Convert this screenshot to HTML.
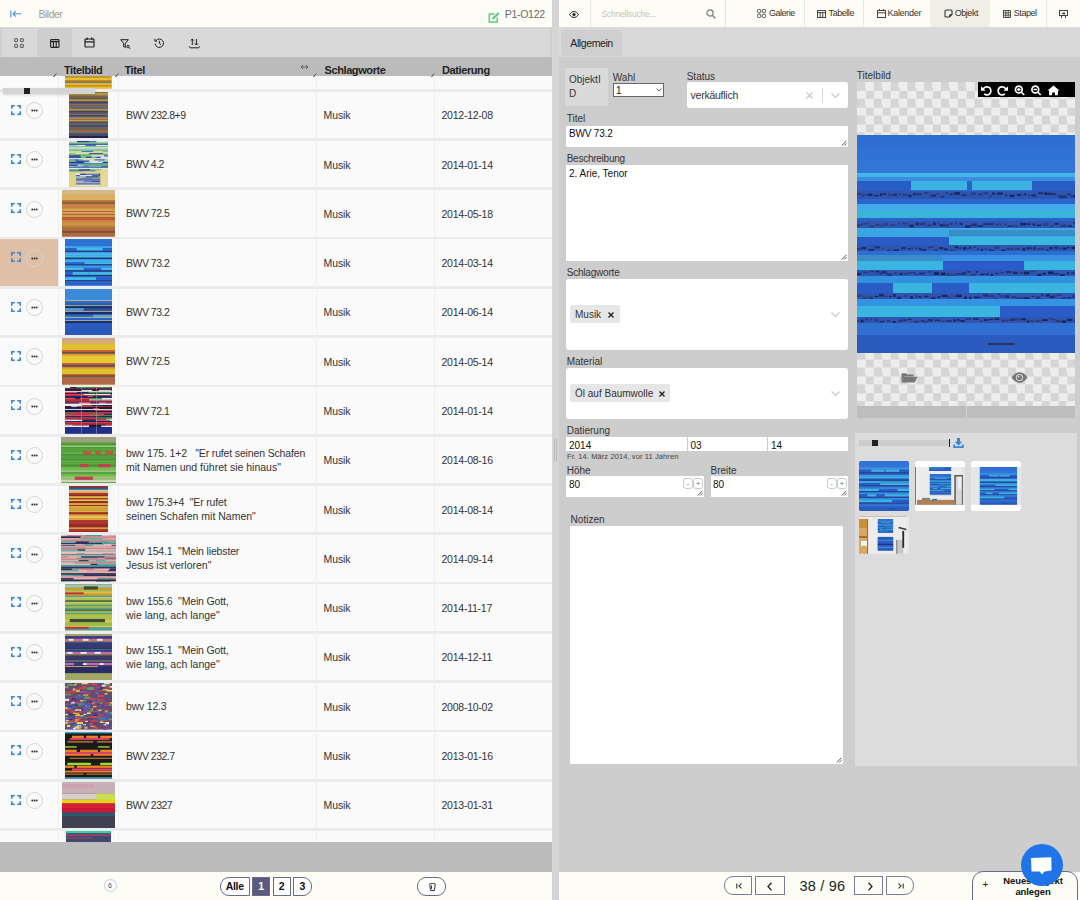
<!DOCTYPE html>
<html><head><meta charset="utf-8">
<style>
*{box-sizing:border-box;margin:0;padding:0}
html,body{width:1080px;height:900px;overflow:hidden;background:#d4d4d4;font-family:"Liberation Sans",sans-serif;color:#333}
.abs{position:absolute}
#left{position:absolute;left:0;top:0;width:552px;height:900px;background:#fafafa;overflow:hidden}
#ltop{position:absolute;left:0;top:0;width:552px;height:28px;background:#fdfdf5;border-bottom:1px solid #dcdcd4}
#ltool{position:absolute;left:0;top:28px;width:552px;height:29px;background:#d9d9d9}
#lhead{position:absolute;left:0;top:57px;width:552px;height:19.2px;background:#bbbbbb}
#rows{position:absolute;left:0;top:0;width:552px;height:842px;overflow:hidden}
.row{position:absolute;left:0;width:552px;background:#fafafa;border-bottom:0}
#rowsbg{position:absolute;left:0;top:77px;width:552px;height:765px;background:#ebebeb}
.hlbg{position:absolute;left:0;top:0;width:58px;background:#dfbfa6}
.colsep{position:absolute;top:77px;height:765px;width:1px;background:#efefef}
.img{position:absolute}
.t{position:absolute;left:126px;font-size:10.5px;line-height:14px;letter-spacing:0px;color:#333;white-space:nowrap}
.t.up{letter-spacing:-0.5px}
.tag{position:absolute;left:323.5px;font-size:10.5px;line-height:14px;letter-spacing:-0.1px;color:#333}
.dt{position:absolute;left:441.5px;font-size:10.5px;line-height:14px;letter-spacing:-0.24px;color:#333}
.fs{position:absolute;left:10.8px}
.dots{position:absolute;left:26px;width:17px;height:17px;border:1px solid #d4d4d4;border-radius:50%;display:flex;align-items:center;justify-content:center;gap:0.8px}
.dots span{width:1.7px;height:1.7px;background:#333;border-radius:1px}
.hd{position:absolute;top:64px;font-size:11px;font-weight:bold;letter-spacing:-0.4px;color:#222;line-height:13px}
#lgrey{position:absolute;left:0;top:842px;width:552px;height:29.7px;background:#bbbbbb}
#lfoot{position:absolute;left:0;top:871.7px;width:552px;height:29px;background:#fdfdf5}
#div{position:absolute;left:552px;top:0;width:7px;height:900px;background:#d5d5d5}
#right{position:absolute;left:559px;top:0;width:521px;height:900px;background:#cdcdcd}
#rtop{position:absolute;left:559px;top:0;width:521px;height:28px;background:#fdfdf5;border-bottom:1px solid #dcdcd4}
#rtabs{position:absolute;left:559px;top:28px;width:521px;height:29px;background:#d9d9d9}
#rfoot{position:absolute;left:559px;top:871.5px;width:521px;height:29px;background:#fdfdf5}

.tb{position:absolute;top:7px;font-size:9px;line-height:12px;letter-spacing:-0.45px;color:#333}
.lb{position:absolute;font-size:10px;line-height:12px;color:#333;margin-top:0.7px}
.inp{background:#fff;border-radius:1px}
.pm{position:absolute;top:477.8px;width:10.2px;height:11px;border:1px solid #ccc;border-radius:3px;background:#fff;font-size:8px;line-height:9px;text-align:center;color:#777}
.checker{background:repeating-conic-gradient(#ededed 0 25%,#d5d5d5 0 50%) 0 0/16.8px 16.8px}
.painting{background:
 linear-gradient(180deg,#3a78d0 0 16%,rgba(0,0,0,0) 16%),
 repeating-linear-gradient(180deg,#2a7ad8 0 6px,#40b0e8 6px 10px,#1a3a8a 10px 12px,#2f8ce0 12px 18px,#1e5cc0 18px 22px)}

.nb{position:absolute;top:876.3px;height:18.4px;border:1px solid #7a7a9a;background:#fdfdf5}
/* paintings */
.p1{background:repeating-linear-gradient(180deg,#4a3d5e 0 2px,#c9a93a 2px 3px,#3e5f7a 3px 5px,#7a6a3a 5px 6px,#5a4a6a 6px 8px)}
.p2{background:linear-gradient(180deg,rgba(0,0,0,0) 60%,#e8d890 60%),repeating-linear-gradient(180deg,#2a5cb8 0 2px,#5cc07a 2px 4px,#e8f0f0 4px 5px,#3a7ac8 5px 7px)}
.p3{background:repeating-linear-gradient(180deg,#d9a24a 0 3px,#b8642e 3px 5px,#e8c050 5px 8px,#a0602a 8px 9px)}
.p4{background:repeating-linear-gradient(180deg,#2a7ad8 0 3px,#38b0e0 3px 5px,#1a4aa0 5px 6px,#3090e0 6px 8px)}
.p5{background:linear-gradient(180deg,#3a90d8 0 20%,rgba(0,0,0,0) 20% 75%,#2a60c0 75%),repeating-linear-gradient(180deg,#2a6ac8 0 3px,#e0e040 3px 4px,#1a3a90 4px 6px,#40a0e0 6px 8px)}
.p6{background:linear-gradient(180deg,#d0a070 0 10%,rgba(0,0,0,0) 10% 85%,#a05030 85%),repeating-linear-gradient(180deg,#e8c030 0 4px,#c04830 4px 5px,#6a4a40 5px 6px,#e0b030 6px 9px)}
.p7{background:repeating-linear-gradient(180deg,#1a2a5a 0 2px,#e04050 2px 3px,#e8e8e8 3px 4px,#30a050 4px 5px,#202040 5px 7px)}
.p8{background:repeating-linear-gradient(180deg,#58a848 0 3px,#d8e0b0 3px 4px,#c05040 4px 5px,#70b050 5px 8px)}
.p9{background:repeating-linear-gradient(180deg,#b03030 0 2px,#e0c040 2px 4px,#9a2a2a 4px 5px,#f0e0a0 5px 6px)}
.p10{background:repeating-linear-gradient(180deg,#e0a0a8 0 2px,#3a4a7a 2px 3px,#40a0a0 3px 4px,#d890a0 4px 6px,#2a2a4a 6px 7px)}
.p11{background:repeating-linear-gradient(180deg,#a0c060 0 2px,#e0a040 2px 3px,#60a0c0 3px 4px,#c0d070 4px 6px,#303040 6px 7px)}
.p12{background:linear-gradient(180deg,rgba(0,0,0,0) 85%,#a0a860 85%),repeating-linear-gradient(180deg,#2a3a70 0 3px,#e050a0 3px 4px,#d0c040 4px 5px,#3a4a80 5px 7px)}
.p13{background:repeating-linear-gradient(135deg,#d0b030 0 2px,#7a3a8a 2px 3px,#4a8ac0 3px 4px,#c04040 4px 5px,#e0d070 5px 6px)}
.p14{background:repeating-linear-gradient(180deg,#1a1a1a 0 2px,#f08030 2px 4px,#e04060 4px 5px,#1a1a1a 5px 6px,#90d040 6px 7px)}
.p15{background:linear-gradient(180deg,#c8b0b8 0 30%,#e8d040 30% 45%,#d83040 45% 65%,#404050 70%)}
.p16{background:linear-gradient(180deg,#30c0a0 0 2px,#504a70 2px)}
</style></head><body>
<div id="left">
 <div id="rowsbg"></div>
 <div id="rows">
 <div class="row" style="top:76px;height:12.5px"><div class="img" style="left:65.2px;top:0;width:46.5px;height:12.5px"><svg width="46.5" height="12.5" viewBox="0 0 100 100" preserveAspectRatio="none" style="display:block"><rect width="100" height="100" fill="#d8a820"/><rect x="0" y="0" width="100" height="15" fill="#c89030"/><rect x="0" y="15" width="100" height="20" fill="#e8c030"/><rect x="0" y="35" width="100" height="10" fill="#c86a20"/><rect x="0" y="45" width="100" height="10" fill="#3a7a8a"/><rect x="0" y="55" width="100" height="20" fill="#e0b828"/><rect x="0" y="75" width="100" height="10" fill="#c87a20"/><rect x="0" y="85" width="100" height="15" fill="#e8c030"/></svg></div></div>
<div class="row" style="top:91.50px;height:46.60px"><svg class="fs" style="top:13px" width="10" height="10" viewBox="0 0 10 10"><path d="M0.8 3.8V0.8h3M6.2 0.8h3v3M9.2 6.2v3h-3M3.8 9.2h-3v-3" stroke="#3a86d6" stroke-width="1.6" fill="none"/></svg><div class="dots" style="top:10.5px"><svg width="15" height="15" viewBox="0 0 15 15" style="position:absolute;left:0;top:0"><circle cx="5.3" cy="7.5" r="0.95" fill="#333"/><circle cx="7.5" cy="7.5" r="0.95" fill="#333"/><circle cx="9.7" cy="7.5" r="0.95" fill="#333"/></svg></div><div class="img" style="left:69px;top:0;width:39px;height:46.6px"><svg width="39" height="46.6" viewBox="0 0 100 100" preserveAspectRatio="none" style="display:block"><rect width="100" height="100" fill="#5a4a58"/><rect x="0" y="0" width="100" height="1.44" fill="#6a5060"/><rect x="0" y="1.44" width="100" height="1.6600000000000001" fill="#d0b040"/><rect x="0" y="3.1" width="100" height="2.57" fill="#d0b040"/><rect x="0" y="5.67" width="100" height="2.369999999999999" fill="#c8a840"/><rect x="0" y="8.04" width="100" height="1.370000000000001" fill="#4a4258"/><rect x="0" y="9.41" width="100" height="2.8100000000000005" fill="#a07a48"/><rect x="0" y="12.22" width="100" height="1.9799999999999986" fill="#4a4258"/><rect x="0" y="14.2" width="100" height="2.4499999999999993" fill="#8a8a48"/><rect x="0" y="16.65" width="100" height="2.5" fill="#c8a840"/><rect x="0" y="19.15" width="100" height="2.2600000000000016" fill="#6a5060"/><rect x="0" y="21.41" width="100" height="2.8299999999999983" fill="#4a4258"/><rect x="0" y="24.24" width="100" height="1.240000000000002" fill="#4a5a8a"/><rect x="0" y="25.48" width="100" height="1.2100000000000009" fill="#a07a48"/><rect x="0" y="26.69" width="100" height="2.4399999999999977" fill="#a07a48"/><rect x="0" y="29.13" width="100" height="2.5100000000000016" fill="#4a5a8a"/><rect x="0" y="31.64" width="100" height="1.6000000000000014" fill="#d0b040"/><rect x="0" y="33.24" width="100" height="2.8900000000000006" fill="#4a5a8a"/><rect x="0" y="36.13" width="100" height="1.6199999999999974" fill="#c8a840"/><rect x="0" y="37.75" width="100" height="2.4099999999999966" fill="#d0b040"/><rect x="0" y="40.16" width="100" height="2.9200000000000017" fill="#4a4258"/><rect x="0" y="43.08" width="100" height="1.9500000000000028" fill="#4a5a8a"/><rect x="0" y="45.03" width="100" height="2.8599999999999994" fill="#6a5060"/><rect x="0" y="47.89" width="100" height="1.5300000000000011" fill="#8a8a48"/><rect x="0" y="49.42" width="100" height="1.4200000000000017" fill="#3a3a5a"/><rect x="0" y="50.84" width="100" height="2.809999999999995" fill="#4a5a8a"/><rect x="0" y="53.65" width="100" height="2.8900000000000006" fill="#a07a48"/><rect x="0" y="56.54" width="100" height="2.1099999999999994" fill="#c8a840"/><rect x="0" y="58.65" width="100" height="1.75" fill="#b86a40"/><rect x="0" y="60.4" width="100" height="2.950000000000003" fill="#d0b040"/><rect x="0" y="63.35" width="100" height="2.7199999999999918" fill="#4a5a8a"/><rect x="0" y="66.07" width="100" height="1.9100000000000108" fill="#4a4258"/><rect x="0" y="67.98" width="100" height="2.0600000000000023" fill="#a07a48"/><rect x="0" y="70.04" width="100" height="1.9499999999999886" fill="#3e6a80"/><rect x="0" y="71.99" width="100" height="1.8599999999999994" fill="#3a3a5a"/><rect x="0" y="73.85" width="100" height="1.3599999999999994" fill="#4a5a8a"/><rect x="0" y="75.21" width="100" height="1.3900000000000006" fill="#3e6a80"/><rect x="0" y="76.6" width="100" height="2.1400000000000006" fill="#a07a48"/><rect x="0" y="78.74" width="100" height="1.8700000000000045" fill="#4a4258"/><rect x="0" y="80.61" width="100" height="2.0400000000000063" fill="#8a8a48"/><rect x="0" y="82.65" width="100" height="2.469999999999999" fill="#b86a40"/><rect x="0" y="85.12" width="100" height="2.259999999999991" fill="#a07a48"/><rect x="0" y="87.38" width="100" height="2.3700000000000045" fill="#3e6a80"/><rect x="0" y="89.75" width="100" height="2.0999999999999943" fill="#4a4258"/><rect x="0" y="91.85" width="100" height="2.5900000000000034" fill="#4a5a8a"/><rect x="0" y="94.44" width="100" height="2.8599999999999994" fill="#4a5a8a"/><rect x="0" y="97.3" width="100" height="1.6099999999999994" fill="#4a5a8a"/><rect x="0" y="98.91" width="100" height="1.0900000000000034" fill="#b86a40"/><rect x="0" y="94" width="100" height="6" fill="#2a2040"/></svg></div><div class="t up" style="top:16.3px;">BWV 232.8+9</div><div class="tag" style="top:16.8px">Musik</div><div class="dt" style="top:16.8px">2012-12-08</div></div>
<div class="row" style="top:140.79px;height:46.60px"><svg class="fs" style="top:13px" width="10" height="10" viewBox="0 0 10 10"><path d="M0.8 3.8V0.8h3M6.2 0.8h3v3M9.2 6.2v3h-3M3.8 9.2h-3v-3" stroke="#3a86d6" stroke-width="1.6" fill="none"/></svg><div class="dots" style="top:10.5px"><svg width="15" height="15" viewBox="0 0 15 15" style="position:absolute;left:0;top:0"><circle cx="5.3" cy="7.5" r="0.95" fill="#333"/><circle cx="7.5" cy="7.5" r="0.95" fill="#333"/><circle cx="9.7" cy="7.5" r="0.95" fill="#333"/></svg></div><div class="img" style="left:69px;top:0;width:39px;height:46.6px"><svg width="39" height="46.6" viewBox="0 0 100 100" preserveAspectRatio="none" style="display:block"><rect width="100" height="100" fill="#d8c878"/><rect x="0" y="0" width="20.83" height="3.13" fill="#d8e8e8"/><rect x="20.83" y="0" width="32.08" height="3.13" fill="#1e3a90"/><rect x="52.91" y="0" width="17.549999999999997" height="3.13" fill="#3a78c8"/><rect x="70.46" y="0" width="28.200000000000003" height="3.13" fill="#d8e8e8"/><rect x="98.66" y="0" width="1.3400000000000034" height="3.13" fill="#90d0e0"/><rect x="0" y="3.13" width="100" height="2.8600000000000003" fill="#70c090"/><rect x="0" y="5.99" width="100" height="2.26" fill="#1e3a90"/><rect x="0" y="8.25" width="19.55" height="2.9800000000000004" fill="#90d0e0"/><rect x="19.55" y="8.25" width="22.709999999999997" height="2.9800000000000004" fill="#d8e8e8"/><rect x="42.26" y="8.25" width="26.82" height="2.9800000000000004" fill="#3a78c8"/><rect x="69.08" y="8.25" width="16.92" height="2.9800000000000004" fill="#d8e8e8"/><rect x="86.0" y="8.25" width="14.0" height="2.9800000000000004" fill="#d8e8e8"/><rect x="0" y="11.23" width="100" height="2.369999999999999" fill="#70c090"/><rect x="0" y="13.6" width="100" height="2.639999999999999" fill="#d8e8e8"/><rect x="0" y="16.24" width="100" height="2.2600000000000016" fill="#90d0e0"/><rect x="0" y="18.5" width="100" height="3.039999999999999" fill="#70c090"/><rect x="0" y="21.54" width="32.62" height="2.1000000000000014" fill="#e0d890"/><rect x="32.62" y="21.54" width="29.650000000000006" height="2.1000000000000014" fill="#3a78c8"/><rect x="62.27" y="21.54" width="24.699999999999996" height="2.1000000000000014" fill="#e0d890"/><rect x="86.97" y="21.54" width="13.030000000000001" height="2.1000000000000014" fill="#70c090"/><rect x="0" y="23.64" width="100" height="2.629999999999999" fill="#e0d890"/><rect x="0" y="26.27" width="16.65" height="2.280000000000001" fill="#70c090"/><rect x="16.65" y="26.27" width="34.440000000000005" height="2.280000000000001" fill="#d8e8e8"/><rect x="51.09" y="26.27" width="36.31" height="2.280000000000001" fill="#1e3a90"/><rect x="87.4" y="26.27" width="12.599999999999994" height="2.280000000000001" fill="#e0d890"/><rect x="0" y="28.55" width="16.23" height="2.0299999999999976" fill="#70c090"/><rect x="16.23" y="28.55" width="38.03" height="2.0299999999999976" fill="#50b878"/><rect x="54.26" y="28.55" width="33.53000000000001" height="2.0299999999999976" fill="#70c090"/><rect x="87.79" y="28.55" width="12.209999999999994" height="2.0299999999999976" fill="#3a78c8"/><rect x="0" y="30.58" width="29.59" height="3.190000000000005" fill="#1e3a90"/><rect x="29.59" y="30.58" width="27.750000000000004" height="3.190000000000005" fill="#50b878"/><rect x="57.34" y="30.58" width="32.629999999999995" height="3.190000000000005" fill="#d8e8e8"/><rect x="89.97" y="30.58" width="10.030000000000001" height="3.190000000000005" fill="#3a78c8"/><rect x="0" y="33.77" width="31.51" height="2.8999999999999986" fill="#2a4cb8"/><rect x="31.51" y="33.77" width="11.7" height="2.8999999999999986" fill="#70c090"/><rect x="43.21" y="33.77" width="15.159999999999997" height="2.8999999999999986" fill="#2a4cb8"/><rect x="58.37" y="33.77" width="12.490000000000002" height="2.8999999999999986" fill="#50b878"/><rect x="70.86" y="33.77" width="10.760000000000005" height="2.8999999999999986" fill="#2a4cb8"/><rect x="81.62" y="33.77" width="18.379999999999995" height="2.8999999999999986" fill="#d8e8e8"/><rect x="0" y="36.67" width="100" height="2.8900000000000006" fill="#d8e8e8"/><rect x="0" y="39.56" width="11.29" height="2.3900000000000006" fill="#3a78c8"/><rect x="11.29" y="39.56" width="14.55" height="2.3900000000000006" fill="#2a4cb8"/><rect x="25.84" y="39.56" width="10.120000000000001" height="2.3900000000000006" fill="#50b878"/><rect x="35.96" y="39.56" width="18.58" height="2.3900000000000006" fill="#e0d890"/><rect x="54.54" y="39.56" width="10.93" height="2.3900000000000006" fill="#e0d890"/><rect x="65.47" y="39.56" width="26.540000000000006" height="2.3900000000000006" fill="#2a4cb8"/><rect x="92.01" y="39.56" width="7.989999999999995" height="2.3900000000000006" fill="#90d0e0"/><rect x="0" y="41.95" width="16.77" height="2.9599999999999937" fill="#70c090"/><rect x="16.77" y="41.95" width="35.150000000000006" height="2.9599999999999937" fill="#2a4cb8"/><rect x="51.92" y="41.95" width="23.429999999999993" height="2.9599999999999937" fill="#d8e8e8"/><rect x="75.35" y="41.95" width="24.650000000000006" height="2.9599999999999937" fill="#90d0e0"/><rect x="0" y="44.91" width="38.79" height="2.3300000000000054" fill="#1e3a90"/><rect x="38.79" y="44.91" width="17.86" height="2.3300000000000054" fill="#90d0e0"/><rect x="56.65" y="44.91" width="29.6" height="2.3300000000000054" fill="#d8e8e8"/><rect x="86.25" y="44.91" width="13.75" height="2.3300000000000054" fill="#1e3a90"/><rect x="0" y="47.24" width="23.6" height="1.5599999999999952" fill="#3a78c8"/><rect x="23.6" y="47.24" width="25.25" height="1.5599999999999952" fill="#2a4cb8"/><rect x="48.85" y="47.24" width="39.839999999999996" height="1.5599999999999952" fill="#3a78c8"/><rect x="88.69" y="47.24" width="11.310000000000002" height="1.5599999999999952" fill="#50b878"/><rect x="0" y="48.8" width="100" height="1.9200000000000017" fill="#3a78c8"/><rect x="0" y="50.72" width="22.69" height="2.8599999999999994" fill="#2a4cb8"/><rect x="22.69" y="50.72" width="14.529999999999998" height="2.8599999999999994" fill="#90d0e0"/><rect x="37.22" y="50.72" width="22.270000000000003" height="2.8599999999999994" fill="#50b878"/><rect x="59.49" y="50.72" width="25.359999999999992" height="2.8599999999999994" fill="#50b878"/><rect x="84.85" y="50.72" width="15.150000000000006" height="2.8599999999999994" fill="#50b878"/><rect x="0" y="53.58" width="10.73" height="1.5399999999999991" fill="#e0d890"/><rect x="10.73" y="53.58" width="23.62" height="1.5399999999999991" fill="#90d0e0"/><rect x="34.35" y="53.58" width="16.369999999999997" height="1.5399999999999991" fill="#3a78c8"/><rect x="50.72" y="53.58" width="31.870000000000005" height="1.5399999999999991" fill="#90d0e0"/><rect x="82.59" y="53.58" width="17.409999999999997" height="1.5399999999999991" fill="#2a4cb8"/><rect x="0" y="55.12" width="100" height="2.490000000000002" fill="#2a4cb8"/><rect x="0" y="57.61" width="100" height="3.0700000000000003" fill="#d8e8e8"/><rect x="0" y="60.68" width="25.58" height="2.6300000000000026" fill="#50b878"/><rect x="25.58" y="60.68" width="28.310000000000002" height="2.6300000000000026" fill="#1e3a90"/><rect x="53.89" y="60.68" width="30.709999999999994" height="2.6300000000000026" fill="#70c090"/><rect x="84.6" y="60.68" width="15.400000000000006" height="2.6300000000000026" fill="#90d0e0"/><rect x="0" y="63.31" width="33.26" height="1.6700000000000017" fill="#2a4cb8"/><rect x="33.26" y="63.31" width="34.36000000000001" height="1.6700000000000017" fill="#2a4cb8"/><rect x="67.62" y="63.31" width="22.319999999999993" height="1.6700000000000017" fill="#e0d890"/><rect x="89.94" y="63.31" width="10.060000000000002" height="1.6700000000000017" fill="#50b878"/><rect x="0" y="64.98" width="38.06" height="1.019999999999996" fill="#50b878"/><rect x="38.06" y="64.98" width="16.57" height="1.019999999999996" fill="#e0d890"/><rect x="54.63" y="64.98" width="15.770000000000003" height="1.019999999999996" fill="#70c090"/><rect x="70.4" y="64.98" width="21.75999999999999" height="1.019999999999996" fill="#e0d890"/><rect x="92.16" y="64.98" width="7.840000000000003" height="1.019999999999996" fill="#70c090"/><rect x="0" y="66" width="100" height="34" fill="#e0d488"/><rect x="18" y="70" width="10.39" height="3.4399999999999977" fill="#e8e8f0"/><rect x="28.39" y="70" width="15.530000000000001" height="3.4399999999999977" fill="#3a4aa0"/><rect x="43.92" y="70" width="32.19" height="3.4399999999999977" fill="#5a80c8"/><rect x="76.11" y="70" width="3.8900000000000006" height="3.4399999999999977" fill="#3a4aa0"/><rect x="18" y="73.44" width="10.030000000000001" height="2.3400000000000034" fill="#2a3a80"/><rect x="28.03" y="73.44" width="30.560000000000002" height="2.3400000000000034" fill="#e8e8f0"/><rect x="58.59" y="73.44" width="21.409999999999997" height="2.3400000000000034" fill="#3a4aa0"/><rect x="18" y="75.78" width="24.9" height="2.8900000000000006" fill="#8ab0d0"/><rect x="42.9" y="75.78" width="33.220000000000006" height="2.8900000000000006" fill="#2a3a80"/><rect x="76.12" y="75.78" width="3.8799999999999955" height="2.8900000000000006" fill="#5a80c8"/><rect x="18" y="78.67" width="15.43" height="2.280000000000001" fill="#8ab0d0"/><rect x="33.43" y="78.67" width="25.46" height="2.280000000000001" fill="#5a80c8"/><rect x="58.89" y="78.67" width="21.11" height="2.280000000000001" fill="#8ab0d0"/><rect x="18" y="80.95" width="62" height="2.069999999999993" fill="#2a3a80"/><rect x="18" y="83.02" width="62" height="2.6300000000000097" fill="#5a80c8"/><rect x="18" y="85.65" width="19.729999999999997" height="2.769999999999996" fill="#d8a0b0"/><rect x="37.73" y="85.65" width="19.220000000000006" height="2.769999999999996" fill="#5a80c8"/><rect x="56.95" y="85.65" width="21.92" height="2.769999999999996" fill="#3a4aa0"/><rect x="78.87" y="85.65" width="1.1299999999999955" height="2.769999999999996" fill="#2a3a80"/><rect x="18" y="88.42" width="62" height="2.6499999999999915" fill="#8ab0d0"/><rect x="18" y="91.07" width="62" height="2.6500000000000057" fill="#3a4aa0"/><rect x="18" y="93.72" width="62" height="2.280000000000001" fill="#e8e8f0"/><rect x="82" y="60" width="18" height="40" fill="#e8d898"/></svg></div><div class="t up" style="top:16.3px;">BWV 4.2</div><div class="tag" style="top:16.8px">Musik</div><div class="dt" style="top:16.8px">2014-01-14</div></div>
<div class="row" style="top:190.08px;height:46.60px"><svg class="fs" style="top:13px" width="10" height="10" viewBox="0 0 10 10"><path d="M0.8 3.8V0.8h3M6.2 0.8h3v3M9.2 6.2v3h-3M3.8 9.2h-3v-3" stroke="#3a86d6" stroke-width="1.6" fill="none"/></svg><div class="dots" style="top:10.5px"><svg width="15" height="15" viewBox="0 0 15 15" style="position:absolute;left:0;top:0"><circle cx="5.3" cy="7.5" r="0.95" fill="#333"/><circle cx="7.5" cy="7.5" r="0.95" fill="#333"/><circle cx="9.7" cy="7.5" r="0.95" fill="#333"/></svg></div><div class="img" style="left:62px;top:0;width:53px;height:46.6px"><svg width="53" height="46.6" viewBox="0 0 100 100" preserveAspectRatio="none" style="display:block"><rect width="100" height="100" fill="#c8944a"/><rect x="0" y="0" width="100" height="10" fill="#d8b888"/><rect x="0" y="10" width="100" height="12" fill="#d8b060"/><rect x="0" y="22" width="100" height="4" fill="#b8703a"/><rect x="0" y="26" width="100" height="4" fill="#8a5a48"/><rect x="0" y="30" width="100" height="2.710000000000001" fill="#c88040"/><rect x="0" y="32.71" width="100" height="2.3999999999999986" fill="#c88040"/><rect x="0" y="35.11" width="100" height="3.4200000000000017" fill="#c88040"/><rect x="0" y="38.53" width="100" height="2.1899999999999977" fill="#c8944a"/><rect x="0" y="40.72" width="100" height="4.730000000000004" fill="#d8a050"/><rect x="0" y="45.45" width="100" height="2.779999999999994" fill="#b85a32"/><rect x="0" y="48.23" width="100" height="2.5700000000000003" fill="#e8cc80"/><rect x="0" y="50.8" width="100" height="3.4100000000000037" fill="#a8683a"/><rect x="0" y="54.21" width="100" height="3.6499999999999986" fill="#d8a050"/><rect x="0" y="57.86" width="100" height="3.9200000000000017" fill="#b85a32"/><rect x="0" y="61.78" width="100" height="2.700000000000003" fill="#b85a32"/><rect x="0" y="64.48" width="100" height="4.599999999999994" fill="#c88040"/><rect x="0" y="69.08" width="100" height="3.1700000000000017" fill="#c8944a"/><rect x="0" y="72.25" width="100" height="4.010000000000005" fill="#c8944a"/><rect x="0" y="76.26" width="100" height="2.4799999999999898" fill="#c88040"/><rect x="0" y="78.74" width="100" height="2.1300000000000097" fill="#a8683a"/><rect x="0" y="80.87" width="100" height="1.1299999999999955" fill="#a8683a"/><rect x="0" y="82" width="100" height="18" fill="#a86a40"/><rect x="0" y="88" width="100" height="4" fill="#8a4a30"/></svg></div><div class="t up" style="top:16.3px;">BWV 72.5</div><div class="tag" style="top:16.8px">Musik</div><div class="dt" style="top:16.8px">2014-05-18</div></div>
<div class="row" style="top:239.37px;height:46.60px"><div class="hlbg" style="height:46.60px"></div><svg class="fs" style="top:13px" width="10" height="10" viewBox="0 0 10 10"><path d="M0.8 3.8V0.8h3M6.2 0.8h3v3M9.2 6.2v3h-3M3.8 9.2h-3v-3" stroke="#3a86d6" stroke-width="1.6" fill="none"/></svg><div class="dots" style="top:10.5px"><svg width="15" height="15" viewBox="0 0 15 15" style="position:absolute;left:0;top:0"><circle cx="5.3" cy="7.5" r="0.95" fill="#333"/><circle cx="7.5" cy="7.5" r="0.95" fill="#333"/><circle cx="9.7" cy="7.5" r="0.95" fill="#333"/></svg></div><div class="img" style="left:65px;top:0;width:47px;height:46.6px"><svg width="47" height="46.6" viewBox="0 0 100 100" preserveAspectRatio="none" style="display:block"><rect width="100" height="100" fill="#2f78d8"/><rect x="0" y="0" width="100" height="16" fill="#2f72d6"/><rect x="0" y="16" width="100" height="3" fill="#4cc0ee"/><rect x="0" y="19" width="100" height="6" fill="#2a62cc"/><rect x="25" y="19" width="55" height="6" fill="#40bce8"/><rect x="0" y="25" width="100" height="3" fill="#28408a"/><rect x="0" y="29" width="100" height="6" fill="#48b4ee"/><rect x="0" y="35" width="100" height="5" fill="#40c0e0"/><rect x="0" y="40" width="100" height="3" fill="#24387a"/><rect x="0" y="44" width="100" height="6" fill="#40aeea"/><rect x="0" y="50" width="42" height="4" fill="#2a62cc"/><rect x="42" y="50" width="58" height="4" fill="#40c0e8"/><rect x="0" y="54" width="100" height="3" fill="#26387a"/><rect x="0" y="57" width="100" height="5" fill="#3a9ae6"/><rect x="0" y="62" width="40" height="5" fill="#40bce8"/><rect x="40" y="62" width="37" height="5" fill="#2a62d0"/><rect x="77" y="62" width="23" height="5" fill="#40bce8"/><rect x="0" y="67" width="100" height="3" fill="#24387a"/><rect x="16" y="71" width="34" height="6" fill="#40bce8"/><rect x="0" y="71" width="16" height="6" fill="#2a62cc"/><rect x="50" y="71" width="50" height="6" fill="#40bce8"/><rect x="0" y="77" width="100" height="3" fill="#26387a"/><rect x="0" y="82" width="66" height="6" fill="#40bce8"/><rect x="66" y="82" width="34" height="6" fill="#2a62cc"/><rect x="0" y="88" width="100" height="2" fill="#24387a"/><rect x="0" y="90" width="100" height="10" fill="#2a64c8"/></svg></div><div class="t up" style="top:16.3px;">BWV 73.2</div><div class="tag" style="top:16.8px">Musik</div><div class="dt" style="top:16.8px">2014-03-14</div></div>
<div class="row" style="top:288.66px;height:46.60px"><svg class="fs" style="top:13px" width="10" height="10" viewBox="0 0 10 10"><path d="M0.8 3.8V0.8h3M6.2 0.8h3v3M9.2 6.2v3h-3M3.8 9.2h-3v-3" stroke="#3a86d6" stroke-width="1.6" fill="none"/></svg><div class="dots" style="top:10.5px"><svg width="15" height="15" viewBox="0 0 15 15" style="position:absolute;left:0;top:0"><circle cx="5.3" cy="7.5" r="0.95" fill="#333"/><circle cx="7.5" cy="7.5" r="0.95" fill="#333"/><circle cx="9.7" cy="7.5" r="0.95" fill="#333"/></svg></div><div class="img" style="left:65px;top:0;width:47px;height:46.6px"><svg width="47" height="46.6" viewBox="0 0 100 100" preserveAspectRatio="none" style="display:block"><rect width="100" height="100" fill="#2a5cc0"/><rect x="0" y="0" width="100" height="24" fill="#3a8ad8"/><rect x="0" y="24" width="100" height="2" fill="#c8d070"/><rect x="0" y="26" width="100" height="5" fill="#2a6ad0"/><rect x="0" y="31" width="100" height="4" fill="#2a5cb0"/><rect x="0" y="35" width="100" height="2" fill="#b8c080"/><rect x="0" y="37" width="100" height="4" fill="#1e2a60"/><rect x="0" y="41" width="40" height="6" fill="#4a9ad8"/><rect x="40" y="41" width="60" height="6" fill="#2a4aa0"/><rect x="0" y="47" width="100" height="2" fill="#d0d080"/><rect x="0" y="49" width="100" height="6" fill="#1e2a60"/><rect x="0" y="55" width="60" height="5" fill="#2a6ad0"/><rect x="60" y="55" width="40" height="5" fill="#58a8e0"/><rect x="0" y="60" width="100" height="2" fill="#c8d070"/><rect x="0" y="62" width="100" height="5" fill="#2a60c8"/><rect x="0" y="67" width="100" height="2" fill="#b8c090"/><rect x="0" y="69" width="100" height="4" fill="#1e2a60"/><rect x="0" y="73" width="100" height="27" fill="#2a5cc0"/><rect x="0" y="85" width="100" height="15" fill="#2a58b8"/></svg></div><div class="t up" style="top:16.3px;">BWV 73.2</div><div class="tag" style="top:16.8px">Musik</div><div class="dt" style="top:16.8px">2014-06-14</div></div>
<div class="row" style="top:337.95px;height:46.60px"><svg class="fs" style="top:13px" width="10" height="10" viewBox="0 0 10 10"><path d="M0.8 3.8V0.8h3M6.2 0.8h3v3M9.2 6.2v3h-3M3.8 9.2h-3v-3" stroke="#3a86d6" stroke-width="1.6" fill="none"/></svg><div class="dots" style="top:10.5px"><svg width="15" height="15" viewBox="0 0 15 15" style="position:absolute;left:0;top:0"><circle cx="5.3" cy="7.5" r="0.95" fill="#333"/><circle cx="7.5" cy="7.5" r="0.95" fill="#333"/><circle cx="9.7" cy="7.5" r="0.95" fill="#333"/></svg></div><div class="img" style="left:62px;top:0;width:53px;height:46.6px"><svg width="53" height="46.6" viewBox="0 0 100 100" preserveAspectRatio="none" style="display:block"><rect width="100" height="100" fill="#e0b830"/><rect x="0" y="0" width="100" height="8" fill="#d0a890"/><rect x="0" y="8" width="100" height="6" fill="#d8b060"/><rect x="0" y="14" width="100" height="12" fill="#e0c030"/><rect x="0" y="26" width="100" height="4" fill="#c85838"/><rect x="0" y="30" width="100" height="4" fill="#6a4a50"/><rect x="0" y="34" width="100" height="4" fill="#d89838"/><rect x="0" y="38" width="100" height="16" fill="#e8c830"/><rect x="0" y="54" width="100" height="4" fill="#b85838"/><rect x="0" y="58" width="100" height="4" fill="#5a4a60"/><rect x="0" y="62" width="100" height="4" fill="#d88838"/><rect x="0" y="66" width="100" height="12" fill="#e0c028"/><rect x="0" y="78" width="100" height="4" fill="#9a4a3a"/><rect x="0" y="82" width="100" height="3" fill="#5a4a50"/><rect x="0" y="85" width="100" height="15" fill="#b06848"/></svg></div><div class="t up" style="top:16.3px;">BWV 72.5</div><div class="tag" style="top:16.8px">Musik</div><div class="dt" style="top:16.8px">2014-05-14</div></div>
<div class="row" style="top:387.24px;height:46.60px"><svg class="fs" style="top:13px" width="10" height="10" viewBox="0 0 10 10"><path d="M0.8 3.8V0.8h3M6.2 0.8h3v3M9.2 6.2v3h-3M3.8 9.2h-3v-3" stroke="#3a86d6" stroke-width="1.6" fill="none"/></svg><div class="dots" style="top:10.5px"><svg width="15" height="15" viewBox="0 0 15 15" style="position:absolute;left:0;top:0"><circle cx="5.3" cy="7.5" r="0.95" fill="#333"/><circle cx="7.5" cy="7.5" r="0.95" fill="#333"/><circle cx="9.7" cy="7.5" r="0.95" fill="#333"/></svg></div><div class="img" style="left:65px;top:0;width:47px;height:46.6px"><svg width="47" height="46.6" viewBox="0 0 100 100" preserveAspectRatio="none" style="display:block"><rect width="100" height="100" fill="#1a1a3a"/><rect x="0" y="0" width="11.45" height="2.05" fill="#f0f0f0"/><rect x="11.45" y="0" width="12.82" height="2.05" fill="#1a1a3a"/><rect x="24.27" y="0" width="37.290000000000006" height="2.05" fill="#30a040"/><rect x="61.56" y="0" width="11.129999999999995" height="2.05" fill="#c83040"/><rect x="72.69" y="0" width="22.540000000000006" height="2.05" fill="#30a040"/><rect x="95.23" y="0" width="4.769999999999996" height="2.05" fill="#c83040"/><rect x="0" y="2.05" width="100" height="1.6" fill="#e04050"/><rect x="0" y="3.65" width="100" height="2.57" fill="#1a1a3a"/><rect x="0" y="6.22" width="35.75" height="2.1800000000000006" fill="#1a1a3a"/><rect x="35.75" y="6.22" width="22.58" height="2.1800000000000006" fill="#f0f0f0"/><rect x="58.33" y="6.22" width="13.530000000000001" height="2.1800000000000006" fill="#1a1a3a"/><rect x="71.86" y="6.22" width="26.810000000000002" height="2.1800000000000006" fill="#e8e8e8"/><rect x="98.67" y="6.22" width="1.3299999999999983" height="2.1800000000000006" fill="#30a040"/><rect x="0" y="8.4" width="100" height="2.129999999999999" fill="#f0f0f0"/><rect x="0" y="10.53" width="25.95" height="2.460000000000001" fill="#e84860"/><rect x="25.95" y="10.53" width="23.970000000000002" height="2.460000000000001" fill="#1a2a6a"/><rect x="49.92" y="10.53" width="20.849999999999994" height="2.460000000000001" fill="#30a040"/><rect x="70.77" y="10.53" width="29.230000000000004" height="2.460000000000001" fill="#30a040"/><rect x="0" y="12.99" width="100" height="1.6400000000000006" fill="#1a1a3a"/><rect x="0" y="14.63" width="39.41" height="2.99" fill="#e04050"/><rect x="39.41" y="14.63" width="25.35000000000001" height="2.99" fill="#e8e8e8"/><rect x="64.76" y="14.63" width="32.72" height="2.99" fill="#e8e8e8"/><rect x="97.48" y="14.63" width="2.519999999999996" height="2.99" fill="#c83040"/><rect x="0" y="17.62" width="100" height="1.5599999999999987" fill="#e04050"/><rect x="0" y="19.18" width="20.51" height="2.4800000000000004" fill="#1a2a6a"/><rect x="20.51" y="19.18" width="27.389999999999997" height="2.4800000000000004" fill="#1a2a6a"/><rect x="47.9" y="19.18" width="12.07" height="2.4800000000000004" fill="#e04050"/><rect x="59.97" y="19.18" width="38.34" height="2.4800000000000004" fill="#1a2a6a"/><rect x="98.31" y="19.18" width="1.6899999999999977" height="2.4800000000000004" fill="#e04050"/><rect x="0" y="21.66" width="100" height="1.6000000000000014" fill="#1a1a3a"/><rect x="0" y="23.26" width="21.57" height="3.1899999999999977" fill="#e84860"/><rect x="21.57" y="23.26" width="10.68" height="3.1899999999999977" fill="#1a2a6a"/><rect x="32.25" y="23.26" width="20.659999999999997" height="3.1899999999999977" fill="#e04050"/><rect x="52.91" y="23.26" width="24.820000000000007" height="3.1899999999999977" fill="#30a040"/><rect x="77.73" y="23.26" width="22.269999999999996" height="3.1899999999999977" fill="#e8e8e8"/><rect x="0" y="26.45" width="36.14" height="2.75" fill="#e04050"/><rect x="36.14" y="26.45" width="14.990000000000002" height="2.75" fill="#c83040"/><rect x="51.13" y="26.45" width="26.490000000000002" height="2.75" fill="#e8e8e8"/><rect x="77.62" y="26.45" width="22.379999999999995" height="2.75" fill="#f0f0f0"/><rect x="0" y="29.2" width="100" height="1.9800000000000004" fill="#c83040"/><rect x="0" y="31.18" width="100" height="2.6600000000000037" fill="#c83040"/><rect x="0" y="33.84" width="29.76" height="1.75" fill="#1a1a3a"/><rect x="29.76" y="33.84" width="24.539999999999996" height="1.75" fill="#e8e8e8"/><rect x="54.3" y="33.84" width="17.89" height="1.75" fill="#1a1a3a"/><rect x="72.19" y="33.84" width="14.370000000000005" height="1.75" fill="#f0f0f0"/><rect x="86.56" y="33.84" width="13.439999999999998" height="1.75" fill="#e84860"/><rect x="0" y="35.59" width="100" height="3.1299999999999955" fill="#f0f0f0"/><rect x="0" y="38.72" width="36.13" height="2.6099999999999994" fill="#f0f0f0"/><rect x="36.13" y="38.72" width="21.769999999999996" height="2.6099999999999994" fill="#c83040"/><rect x="57.9" y="38.72" width="21.82" height="2.6099999999999994" fill="#1a2a6a"/><rect x="79.72" y="38.72" width="20.28" height="2.6099999999999994" fill="#1a1a3a"/><rect x="0" y="41.33" width="13.3" height="1.8200000000000003" fill="#1a1a3a"/><rect x="13.3" y="41.33" width="13.07" height="1.8200000000000003" fill="#e8e8e8"/><rect x="26.37" y="41.33" width="26.099999999999998" height="1.8200000000000003" fill="#e84860"/><rect x="52.47" y="41.33" width="28.409999999999997" height="1.8200000000000003" fill="#e04050"/><rect x="80.88" y="41.33" width="19.120000000000005" height="1.8200000000000003" fill="#c83040"/><rect x="0" y="43.15" width="100" height="1.759999999999998" fill="#1a1a3a"/><rect x="0" y="44.91" width="35.47" height="2.520000000000003" fill="#1a2a6a"/><rect x="35.47" y="44.91" width="24.410000000000004" height="2.520000000000003" fill="#1a1a3a"/><rect x="59.88" y="44.91" width="12.579999999999991" height="2.520000000000003" fill="#e04050"/><rect x="72.46" y="44.91" width="27.540000000000006" height="2.520000000000003" fill="#1a1a3a"/><rect x="0" y="47.43" width="100" height="2.3100000000000023" fill="#e8e8e8"/><rect x="0" y="49.74" width="30.7" height="1.8500000000000014" fill="#1a1a3a"/><rect x="30.7" y="49.74" width="32.75" height="1.8500000000000014" fill="#1a1a3a"/><rect x="63.45" y="49.74" width="36.55" height="1.8500000000000014" fill="#e04050"/><rect x="0" y="51.59" width="100" height="2.6799999999999997" fill="#1a1a3a"/><rect x="0" y="54.27" width="100" height="3.049999999999997" fill="#e84860"/><rect x="0" y="57.32" width="16.69" height="2.3999999999999986" fill="#30a040"/><rect x="16.69" y="57.32" width="34.17999999999999" height="2.3999999999999986" fill="#c83040"/><rect x="50.87" y="57.32" width="32.199999999999996" height="2.3999999999999986" fill="#30a040"/><rect x="83.07" y="57.32" width="16.0" height="2.3999999999999986" fill="#1a2a6a"/><rect x="99.07" y="57.32" width="0.9300000000000068" height="2.3999999999999986" fill="#1a1a3a"/><rect x="0" y="59.72" width="15.81" height="3.1899999999999977" fill="#e84860"/><rect x="15.81" y="59.72" width="23.419999999999995" height="3.1899999999999977" fill="#e84860"/><rect x="39.23" y="59.72" width="38.65" height="3.1899999999999977" fill="#e84860"/><rect x="77.88" y="59.72" width="12.41000000000001" height="3.1899999999999977" fill="#e04050"/><rect x="90.29" y="59.72" width="9.709999999999994" height="3.1899999999999977" fill="#30a040"/><rect x="0" y="62.91" width="100" height="2.0700000000000074" fill="#1a2a6a"/><rect x="0" y="64.98" width="29.59" height="3.030000000000001" fill="#e04050"/><rect x="29.59" y="64.98" width="35.03999999999999" height="3.030000000000001" fill="#e04050"/><rect x="64.63" y="64.98" width="35.370000000000005" height="3.030000000000001" fill="#30a040"/><rect x="0" y="68.01" width="29.08" height="2.309999999999988" fill="#e04050"/><rect x="29.08" y="68.01" width="34.02" height="2.309999999999988" fill="#c83040"/><rect x="63.1" y="68.01" width="23.889999999999993" height="2.309999999999988" fill="#e04050"/><rect x="86.99" y="68.01" width="13.010000000000005" height="2.309999999999988" fill="#e8e8e8"/><rect x="0" y="70.32" width="37.15" height="3.190000000000012" fill="#e8e8e8"/><rect x="37.15" y="70.32" width="28.339999999999996" height="3.190000000000012" fill="#1a2a6a"/><rect x="65.49" y="70.32" width="29.72" height="3.190000000000012" fill="#e84860"/><rect x="95.21" y="70.32" width="4.790000000000006" height="3.190000000000012" fill="#f0f0f0"/><rect x="0" y="73.51" width="100" height="1.7299999999999898" fill="#1a1a3a"/><rect x="0" y="75.24" width="100" height="2.730000000000004" fill="#e04050"/><rect x="0" y="77.97" width="100" height="3.0900000000000034" fill="#c83040"/><rect x="0" y="81.06" width="16.38" height="1.8299999999999983" fill="#f0f0f0"/><rect x="16.38" y="81.06" width="17.220000000000002" height="1.8299999999999983" fill="#e84860"/><rect x="33.6" y="81.06" width="17.78" height="1.8299999999999983" fill="#c83040"/><rect x="51.38" y="81.06" width="35.029999999999994" height="1.8299999999999983" fill="#1a1a3a"/><rect x="86.41" y="81.06" width="13.590000000000003" height="1.8299999999999983" fill="#e84860"/><rect x="0" y="82.89" width="37.53" height="3.019999999999996" fill="#f0f0f0"/><rect x="37.53" y="82.89" width="13.920000000000002" height="3.019999999999996" fill="#e8e8e8"/><rect x="51.45" y="82.89" width="25.709999999999994" height="3.019999999999996" fill="#1a1a3a"/><rect x="77.16" y="82.89" width="22.840000000000003" height="3.019999999999996" fill="#e8e8e8"/><rect x="0" y="85.91" width="24.2" height="0.09000000000000341" fill="#e04050"/><rect x="24.2" y="85.91" width="26.7" height="0.09000000000000341" fill="#e84860"/><rect x="50.9" y="85.91" width="30.470000000000006" height="0.09000000000000341" fill="#f0f0f0"/><rect x="81.37" y="85.91" width="18.629999999999995" height="0.09000000000000341" fill="#e04050"/><rect x="0" y="86" width="100" height="14" fill="#20308a"/><rect x="34" y="0" width="1" height="100" fill="#b0b0b0"/><rect x="67" y="0" width="1" height="100" fill="#b0b0b0"/></svg></div><div class="t up" style="top:16.3px;">BWV 72.1</div><div class="tag" style="top:16.8px">Musik</div><div class="dt" style="top:16.8px">2014-01-14</div></div>
<div class="row" style="top:436.53px;height:46.60px"><svg class="fs" style="top:13px" width="10" height="10" viewBox="0 0 10 10"><path d="M0.8 3.8V0.8h3M6.2 0.8h3v3M9.2 6.2v3h-3M3.8 9.2h-3v-3" stroke="#3a86d6" stroke-width="1.6" fill="none"/></svg><div class="dots" style="top:10.5px"><svg width="15" height="15" viewBox="0 0 15 15" style="position:absolute;left:0;top:0"><circle cx="5.3" cy="7.5" r="0.95" fill="#333"/><circle cx="7.5" cy="7.5" r="0.95" fill="#333"/><circle cx="9.7" cy="7.5" r="0.95" fill="#333"/></svg></div><div class="img" style="left:61px;top:0;width:55px;height:46.6px"><svg width="55" height="46.6" viewBox="0 0 100 100" preserveAspectRatio="none" style="display:block"><rect width="100" height="100" fill="#60b040"/><rect x="0" y="0" width="100" height="12" fill="#a0a080"/><rect x="0" y="12" width="100" height="2.6799999999999997" fill="#58a040"/><rect x="0" y="14.68" width="100" height="2.379999999999999" fill="#4a9038"/><rect x="0" y="17.06" width="100" height="2.1300000000000026" fill="#70c050"/><rect x="0" y="19.19" width="100" height="2.7399999999999984" fill="#a0c080"/><rect x="0" y="21.93" width="100" height="2.629999999999999" fill="#4a9038"/><rect x="0" y="24.56" width="100" height="2.09" fill="#58a040"/><rect x="0" y="26.65" width="100" height="3.360000000000003" fill="#58a040"/><rect x="0" y="30.01" width="100" height="3.7199999999999953" fill="#58a040"/><rect x="0" y="33.73" width="100" height="2.270000000000003" fill="#70c050"/><rect x="0" y="36.0" width="100" height="4.280000000000001" fill="#4a9038"/><rect x="0" y="40.28" width="100" height="2.799999999999997" fill="#58a040"/><rect x="0" y="43.08" width="100" height="3.4200000000000017" fill="#58a040"/><rect x="0" y="46.5" width="100" height="4.18" fill="#4a9038"/><rect x="0" y="50.68" width="100" height="2.770000000000003" fill="#60b040"/><rect x="0" y="53.45" width="100" height="3.1599999999999966" fill="#58a040"/><rect x="0" y="56.61" width="100" height="2.3299999999999983" fill="#60b040"/><rect x="0" y="58.94" width="100" height="3.010000000000005" fill="#4a9038"/><rect x="0" y="61.95" width="100" height="2.259999999999991" fill="#4a9038"/><rect x="0" y="64.21" width="100" height="3.5500000000000114" fill="#70c050"/><rect x="0" y="67.76" width="100" height="3.739999999999995" fill="#70c050"/><rect x="0" y="71.5" width="100" height="3.819999999999993" fill="#a0c080"/><rect x="0" y="75.32" width="100" height="4.840000000000003" fill="#58a040"/><rect x="0" y="80.16" width="100" height="4.109999999999999" fill="#70c050"/><rect x="0" y="84.27" width="100" height="4.840000000000003" fill="#a0c080"/><rect x="0" y="89.11" width="100" height="3.3599999999999994" fill="#a0c080"/><rect x="0" y="92.47" width="100" height="4.650000000000006" fill="#d8d8c0"/><rect x="0" y="97.12" width="100" height="2.8799999999999955" fill="#58a040"/><rect x="40" y="30" width="15" height="8" fill="#c05840"/><rect x="62" y="30" width="10" height="8" fill="#c05840"/><rect x="80" y="30" width="15" height="8" fill="#c05840"/><rect x="35" y="58" width="15" height="7" fill="#c04050"/><rect x="68" y="58" width="22" height="7" fill="#c04050"/><rect x="25" y="85" width="33" height="7" fill="#c04050"/></svg></div><div class="t" style="top:9.3px"><span style="letter-spacing:-0.15px">bwv 175. 1+2 &nbsp; "Er rufet seinen Schafen</span><br>mit Namen und führet sie hinaus"</div><div class="tag" style="top:16.8px">Musik</div><div class="dt" style="top:16.8px">2014-08-16</div></div>
<div class="row" style="top:485.82px;height:46.60px"><svg class="fs" style="top:13px" width="10" height="10" viewBox="0 0 10 10"><path d="M0.8 3.8V0.8h3M6.2 0.8h3v3M9.2 6.2v3h-3M3.8 9.2h-3v-3" stroke="#3a86d6" stroke-width="1.6" fill="none"/></svg><div class="dots" style="top:10.5px"><svg width="15" height="15" viewBox="0 0 15 15" style="position:absolute;left:0;top:0"><circle cx="5.3" cy="7.5" r="0.95" fill="#333"/><circle cx="7.5" cy="7.5" r="0.95" fill="#333"/><circle cx="9.7" cy="7.5" r="0.95" fill="#333"/></svg></div><div class="img" style="left:69px;top:0;width:39px;height:46.6px"><svg width="39" height="46.6" viewBox="0 0 100 100" preserveAspectRatio="none" style="display:block"><rect width="100" height="100" fill="#b83a30"/><rect x="0" y="0" width="100" height="3" fill="#a02828"/><rect x="0" y="3" width="100" height="3" fill="#3a4a80"/><rect x="0" y="6" width="100" height="3" fill="#2a8aa0"/><rect x="0" y="9" width="100" height="3.16" fill="#f0e0c0"/><rect x="0" y="12.16" width="100" height="2.67" fill="#e0c850"/><rect x="0" y="14.83" width="100" height="4.159999999999998" fill="#b03530"/><rect x="0" y="18.99" width="100" height="2.8500000000000014" fill="#8a2a2a"/><rect x="0" y="21.84" width="100" height="4.239999999999998" fill="#d8b840"/><rect x="0" y="26.08" width="100" height="2.8400000000000034" fill="#b03530"/><rect x="0" y="28.92" width="100" height="3.8200000000000003" fill="#e0c850"/><rect x="0" y="32.74" width="100" height="3.759999999999998" fill="#8a2a2a"/><rect x="0" y="36.5" width="100" height="4.380000000000003" fill="#d8a838"/><rect x="0" y="40.88" width="100" height="2.3900000000000006" fill="#a02828"/><rect x="0" y="43.27" width="100" height="2.1299999999999955" fill="#e0c850"/><rect x="0" y="45.4" width="100" height="3.259999999999998" fill="#d8b840"/><rect x="0" y="48.66" width="100" height="3.940000000000005" fill="#d8a838"/><rect x="0" y="52.6" width="100" height="3.969999999999999" fill="#d8b840"/><rect x="0" y="56.57" width="100" height="4.299999999999997" fill="#a02828"/><rect x="0" y="60.87" width="100" height="3.690000000000005" fill="#d8a838"/><rect x="0" y="64.56" width="100" height="4.219999999999999" fill="#e8c860"/><rect x="0" y="68.78" width="100" height="4.280000000000001" fill="#d8a838"/><rect x="0" y="73.06" width="100" height="2.700000000000003" fill="#b03530"/><rect x="0" y="75.76" width="100" height="2.5" fill="#b03530"/><rect x="0" y="78.26" width="100" height="4.199999999999989" fill="#b03530"/><rect x="0" y="82.46" width="100" height="4.240000000000009" fill="#8a2a2a"/><rect x="0" y="86.7" width="100" height="2.3499999999999943" fill="#a02828"/><rect x="0" y="89.05" width="100" height="3.0600000000000023" fill="#d8b840"/><rect x="0" y="92.11" width="100" height="4.409999999999997" fill="#b03530"/><rect x="0" y="96.52" width="100" height="2.299999999999997" fill="#a02828"/><rect x="0" y="98.82" width="100" height="1.1800000000000068" fill="#a02828"/></svg></div><div class="t" style="top:9.3px"><span style="letter-spacing:-0.15px">bwv 175.3+4 &nbsp;"Er rufet</span><br>seinen Schafen mit Namen"</div><div class="tag" style="top:16.8px">Musik</div><div class="dt" style="top:16.8px">2014-08-14</div></div>
<div class="row" style="top:535.11px;height:46.60px"><svg class="fs" style="top:13px" width="10" height="10" viewBox="0 0 10 10"><path d="M0.8 3.8V0.8h3M6.2 0.8h3v3M9.2 6.2v3h-3M3.8 9.2h-3v-3" stroke="#3a86d6" stroke-width="1.6" fill="none"/></svg><div class="dots" style="top:10.5px"><svg width="15" height="15" viewBox="0 0 15 15" style="position:absolute;left:0;top:0"><circle cx="5.3" cy="7.5" r="0.95" fill="#333"/><circle cx="7.5" cy="7.5" r="0.95" fill="#333"/><circle cx="9.7" cy="7.5" r="0.95" fill="#333"/></svg></div><div class="img" style="left:61px;top:0;width:55px;height:46.6px"><svg width="55" height="46.6" viewBox="0 0 100 100" preserveAspectRatio="none" style="display:block"><rect width="100" height="100" fill="#d8a0a0"/><rect x="0" y="0" width="10.44" height="2.93" fill="#e8c0c0"/><rect x="10.44" y="0" width="34.400000000000006" height="2.93" fill="#c88890"/><rect x="44.84" y="0" width="29.61" height="2.93" fill="#40a090"/><rect x="74.45" y="0" width="11.030000000000001" height="2.93" fill="#e8c0c0"/><rect x="85.48" y="0" width="14.519999999999996" height="2.93" fill="#e0b0b0"/><rect x="0" y="2.93" width="35.8" height="3.8799999999999994" fill="#2a2a4a"/><rect x="35.8" y="2.93" width="21.450000000000003" height="3.8799999999999994" fill="#c88890"/><rect x="57.25" y="2.93" width="34.81" height="3.8799999999999994" fill="#c88890"/><rect x="92.06" y="2.93" width="7.939999999999998" height="3.8799999999999994" fill="#c88890"/><rect x="0" y="6.81" width="35.8" height="3.1500000000000012" fill="#e0b0b0"/><rect x="35.8" y="6.81" width="39.08" height="3.1500000000000012" fill="#5ab0a0"/><rect x="74.88" y="6.81" width="11.329999999999998" height="3.1500000000000012" fill="#d8a0a0"/><rect x="86.21" y="6.81" width="13.790000000000006" height="3.1500000000000012" fill="#e0b0b0"/><rect x="0" y="9.96" width="100" height="3.8599999999999994" fill="#c88890"/><rect x="0" y="13.82" width="26.47" height="3.4299999999999997" fill="#5ab0a0"/><rect x="26.47" y="13.82" width="24.1" height="3.4299999999999997" fill="#2a2a4a"/><rect x="50.57" y="13.82" width="35.32" height="3.4299999999999997" fill="#40a090"/><rect x="85.89" y="13.82" width="14.11" height="3.4299999999999997" fill="#5ab0a0"/><rect x="0" y="17.25" width="34.54" height="2.09" fill="#2a3070"/><rect x="34.54" y="17.25" width="26.0" height="2.09" fill="#2a3070"/><rect x="60.54" y="17.25" width="14.490000000000002" height="2.09" fill="#2a2a4a"/><rect x="75.03" y="17.25" width="24.97" height="2.09" fill="#40a090"/><rect x="0" y="19.34" width="39.46" height="1.7800000000000011" fill="#e0b0b0"/><rect x="39.46" y="19.34" width="38.43" height="1.7800000000000011" fill="#5ab0a0"/><rect x="77.89" y="19.34" width="22.11" height="1.7800000000000011" fill="#e8c0c0"/><rect x="0" y="21.12" width="25.66" height="2.1199999999999974" fill="#2a3070"/><rect x="25.66" y="21.12" width="18.01" height="2.1199999999999974" fill="#c88890"/><rect x="43.67" y="21.12" width="14.939999999999998" height="2.1199999999999974" fill="#40a090"/><rect x="58.61" y="21.12" width="33.33" height="2.1199999999999974" fill="#e8c0c0"/><rect x="91.94" y="21.12" width="8.060000000000002" height="2.1199999999999974" fill="#2a2a4a"/><rect x="0" y="23.24" width="100" height="2.59" fill="#d8a0a0"/><rect x="0" y="25.83" width="17.85" height="1.6000000000000014" fill="#5ab0a0"/><rect x="17.85" y="25.83" width="27.490000000000002" height="1.6000000000000014" fill="#5ab0a0"/><rect x="45.34" y="25.83" width="37.61999999999999" height="1.6000000000000014" fill="#e8c0c0"/><rect x="82.96" y="25.83" width="17.040000000000006" height="1.6000000000000014" fill="#e0b0b0"/><rect x="0" y="27.43" width="100" height="3.3500000000000014" fill="#c88890"/><rect x="0" y="30.78" width="30.23" height="3.0" fill="#5ab0a0"/><rect x="30.23" y="30.78" width="14.069999999999997" height="3.0" fill="#2a2a4a"/><rect x="44.3" y="30.78" width="26.159999999999997" height="3.0" fill="#e8c0c0"/><rect x="70.46" y="30.78" width="29.540000000000006" height="3.0" fill="#e8c0c0"/><rect x="0" y="33.78" width="100" height="1.75" fill="#5ab0a0"/><rect x="0" y="35.53" width="100" height="3.6799999999999997" fill="#e8c0c0"/><rect x="0" y="39.21" width="28.25" height="1.6199999999999974" fill="#e8c0c0"/><rect x="28.25" y="39.21" width="14.18" height="1.6199999999999974" fill="#5ab0a0"/><rect x="42.43" y="39.21" width="33.23" height="1.6199999999999974" fill="#e8c0c0"/><rect x="75.66" y="39.21" width="20.299999999999997" height="1.6199999999999974" fill="#c88890"/><rect x="95.96" y="39.21" width="4.040000000000006" height="1.6199999999999974" fill="#e8c0c0"/><rect x="0" y="40.83" width="100" height="2.5600000000000023" fill="#40a090"/><rect x="0" y="43.39" width="100" height="2.3100000000000023" fill="#d8a0a0"/><rect x="0" y="45.7" width="13.49" height="3.1099999999999994" fill="#c88890"/><rect x="13.49" y="45.7" width="23.059999999999995" height="3.1099999999999994" fill="#e0b0b0"/><rect x="36.55" y="45.7" width="31.549999999999997" height="3.1099999999999994" fill="#2a3070"/><rect x="68.1" y="45.7" width="11.39" height="3.1099999999999994" fill="#2a3070"/><rect x="79.49" y="45.7" width="20.510000000000005" height="3.1099999999999994" fill="#c88890"/><rect x="0" y="48.81" width="27.85" height="1.8999999999999986" fill="#e0b0b0"/><rect x="27.85" y="48.81" width="39.580000000000005" height="1.8999999999999986" fill="#40a090"/><rect x="67.43" y="48.81" width="12.389999999999986" height="1.8999999999999986" fill="#e0b0b0"/><rect x="79.82" y="48.81" width="20.180000000000007" height="1.8999999999999986" fill="#2a3070"/><rect x="0" y="50.71" width="100" height="3.210000000000001" fill="#c88890"/><rect x="0" y="53.92" width="32.3" height="2.6599999999999966" fill="#e0b0b0"/><rect x="32.3" y="53.92" width="17.980000000000004" height="2.6599999999999966" fill="#2a2a4a"/><rect x="50.28" y="53.92" width="13.479999999999997" height="2.6599999999999966" fill="#d8a0a0"/><rect x="63.76" y="53.92" width="16.29" height="2.6599999999999966" fill="#5ab0a0"/><rect x="80.05" y="53.92" width="19.950000000000003" height="2.6599999999999966" fill="#e0b0b0"/><rect x="0" y="56.58" width="100" height="1.6799999999999997" fill="#5ab0a0"/><rect x="0" y="58.26" width="23.71" height="3.5600000000000023" fill="#e0b0b0"/><rect x="23.71" y="58.26" width="28.86" height="3.5600000000000023" fill="#c88890"/><rect x="52.57" y="58.26" width="23.999999999999993" height="3.5600000000000023" fill="#c88890"/><rect x="76.57" y="58.26" width="23.430000000000007" height="3.5600000000000023" fill="#c88890"/><rect x="0" y="61.82" width="18.31" height="2.509999999999998" fill="#e8c0c0"/><rect x="18.31" y="61.82" width="35.599999999999994" height="2.509999999999998" fill="#e8c0c0"/><rect x="53.91" y="61.82" width="12.52000000000001" height="2.509999999999998" fill="#2a2a4a"/><rect x="66.43" y="61.82" width="33.56999999999999" height="2.509999999999998" fill="#5ab0a0"/><rect x="0" y="64.33" width="100" height="3.780000000000001" fill="#40a090"/><rect x="0" y="68.11" width="100" height="3.980000000000004" fill="#2a3070"/><rect x="0" y="72.09" width="19.83" height="3.3299999999999983" fill="#2a2a4a"/><rect x="19.83" y="72.09" width="12.219999999999999" height="3.3299999999999983" fill="#5ab0a0"/><rect x="32.05" y="72.09" width="28.310000000000002" height="3.3299999999999983" fill="#c88890"/><rect x="60.36" y="72.09" width="28.17" height="3.3299999999999983" fill="#e0b0b0"/><rect x="88.53" y="72.09" width="11.469999999999999" height="3.3299999999999983" fill="#2a3070"/><rect x="0" y="75.42" width="32.35" height="2.8900000000000006" fill="#5ab0a0"/><rect x="32.35" y="75.42" width="15.75" height="2.8900000000000006" fill="#e8c0c0"/><rect x="48.1" y="75.42" width="37.449999999999996" height="2.8900000000000006" fill="#d8a0a0"/><rect x="85.55" y="75.42" width="14.450000000000003" height="2.8900000000000006" fill="#2a2a4a"/><rect x="0" y="78.31" width="100" height="3.6200000000000045" fill="#e0b0b0"/><rect x="0" y="81.93" width="100" height="3.529999999999987" fill="#2a2a4a"/><rect x="0" y="85.46" width="20.98" height="3.1400000000000006" fill="#5ab0a0"/><rect x="20.98" y="85.46" width="19.74" height="3.1400000000000006" fill="#40a090"/><rect x="40.72" y="85.46" width="33.18000000000001" height="3.1400000000000006" fill="#2a3070"/><rect x="73.9" y="85.46" width="26.099999999999994" height="3.1400000000000006" fill="#2a2a4a"/><rect x="0" y="88.6" width="100" height="4.0" fill="#d8a0a0"/><rect x="0" y="92.6" width="23.18" height="2.8400000000000034" fill="#2a2a4a"/><rect x="23.18" y="92.6" width="11.79" height="2.8400000000000034" fill="#e8c0c0"/><rect x="34.97" y="92.6" width="31.189999999999998" height="2.8400000000000034" fill="#e8c0c0"/><rect x="66.16" y="92.6" width="31.680000000000007" height="2.8400000000000034" fill="#40a090"/><rect x="97.84" y="92.6" width="2.1599999999999966" height="2.8400000000000034" fill="#5ab0a0"/><rect x="0" y="95.44" width="100" height="3.5600000000000023" fill="#2a2a4a"/><rect x="0" y="99.0" width="22.99" height="1.0" fill="#40a090"/><rect x="22.99" y="99.0" width="11.239999999999998" height="1.0" fill="#40a090"/><rect x="34.23" y="99.0" width="29.200000000000003" height="1.0" fill="#e0b0b0"/><rect x="63.43" y="99.0" width="27.1" height="1.0" fill="#2a2a4a"/><rect x="90.53" y="99.0" width="9.469999999999999" height="1.0" fill="#d8a0a0"/></svg></div><div class="t" style="top:9.3px"><span style="letter-spacing:-0.15px">bwv 154.1 &nbsp;"Mein liebster</span><br>Jesus ist verloren"</div><div class="tag" style="top:16.8px">Musik</div><div class="dt" style="top:16.8px">2014-09-14</div></div>
<div class="row" style="top:584.40px;height:46.60px"><svg class="fs" style="top:13px" width="10" height="10" viewBox="0 0 10 10"><path d="M0.8 3.8V0.8h3M6.2 0.8h3v3M9.2 6.2v3h-3M3.8 9.2h-3v-3" stroke="#3a86d6" stroke-width="1.6" fill="none"/></svg><div class="dots" style="top:10.5px"><svg width="15" height="15" viewBox="0 0 15 15" style="position:absolute;left:0;top:0"><circle cx="5.3" cy="7.5" r="0.95" fill="#333"/><circle cx="7.5" cy="7.5" r="0.95" fill="#333"/><circle cx="9.7" cy="7.5" r="0.95" fill="#333"/></svg></div><div class="img" style="left:65px;top:0;width:47px;height:46.6px"><svg width="47" height="46.6" viewBox="0 0 100 100" preserveAspectRatio="none" style="display:block"><rect width="100" height="100" fill="#b0c050"/><rect x="0" y="0" width="100" height="3.13" fill="#80b0d0"/><rect x="0" y="3.13" width="100" height="3.13" fill="#c8d060"/><rect x="0" y="6.26" width="100" height="2.460000000000001" fill="#80b0d0"/><rect x="0" y="8.72" width="100" height="3.58" fill="#e09030"/><rect x="0" y="12.3" width="100" height="2.2299999999999986" fill="#a0b848"/><rect x="0" y="14.53" width="100" height="2.360000000000001" fill="#b0c050"/><rect x="0" y="16.89" width="100" height="3.4899999999999984" fill="#e8c040"/><rect x="0" y="20.38" width="100" height="4.41" fill="#e09030"/><rect x="0" y="24.79" width="100" height="3.5500000000000007" fill="#48a0a0"/><rect x="0" y="28.34" width="100" height="2.1499999999999986" fill="#c8d060"/><rect x="0" y="30.49" width="100" height="4.199999999999999" fill="#b0c050"/><rect x="0" y="34.69" width="100" height="3.950000000000003" fill="#5a6a40"/><rect x="0" y="38.64" width="100" height="3.1000000000000014" fill="#c8d060"/><rect x="0" y="41.74" width="100" height="3.299999999999997" fill="#a0b848"/><rect x="0" y="45.04" width="100" height="3.25" fill="#48a0a0"/><rect x="0" y="48.29" width="100" height="3.1400000000000006" fill="#a0b848"/><rect x="0" y="51.43" width="100" height="3.020000000000003" fill="#48a0a0"/><rect x="0" y="54.45" width="100" height="3.769999999999996" fill="#5a6a40"/><rect x="0" y="58.22" width="100" height="3.8900000000000006" fill="#a0b848"/><rect x="0" y="62.11" width="100" height="2.0799999999999983" fill="#48a0a0"/><rect x="0" y="64.19" width="100" height="3.0" fill="#a0b848"/><rect x="0" y="67.19" width="100" height="2.960000000000008" fill="#b0c050"/><rect x="0" y="70.15" width="100" height="4.11999999999999" fill="#b0c050"/><rect x="0" y="74.27" width="100" height="2.5400000000000063" fill="#b0c050"/><rect x="0" y="76.81" width="100" height="3.1700000000000017" fill="#e8c040"/><rect x="0" y="79.98" width="100" height="3.049999999999997" fill="#c8d060"/><rect x="0" y="83.03" width="100" height="3.950000000000003" fill="#a0b848"/><rect x="0" y="86.98" width="100" height="2.839999999999989" fill="#a0b848"/><rect x="0" y="89.82" width="100" height="2.8300000000000125" fill="#e8c040"/><rect x="0" y="92.65" width="100" height="3.8900000000000006" fill="#48a0a0"/><rect x="0" y="96.54" width="100" height="2.339999999999989" fill="#48a0a0"/><rect x="0" y="98.88" width="100" height="1.1200000000000045" fill="#80b0d0"/><rect x="40" y="5" width="30" height="7" fill="#3a4a30"/><rect x="0" y="18" width="40" height="4" fill="#c03030"/><rect x="10" y="75" width="75" height="7" fill="#3a4a30"/><rect x="0" y="92" width="50" height="4" fill="#c03030"/></svg></div><div class="t" style="top:9.3px"><span style="letter-spacing:-0.15px">bwv 155.6 &nbsp;"Mein Gott,</span><br>wie lang, ach lange"</div><div class="tag" style="top:16.8px">Musik</div><div class="dt" style="top:16.8px">2014-11-17</div></div>
<div class="row" style="top:633.69px;height:46.60px"><svg class="fs" style="top:13px" width="10" height="10" viewBox="0 0 10 10"><path d="M0.8 3.8V0.8h3M6.2 0.8h3v3M9.2 6.2v3h-3M3.8 9.2h-3v-3" stroke="#3a86d6" stroke-width="1.6" fill="none"/></svg><div class="dots" style="top:10.5px"><svg width="15" height="15" viewBox="0 0 15 15" style="position:absolute;left:0;top:0"><circle cx="5.3" cy="7.5" r="0.95" fill="#333"/><circle cx="7.5" cy="7.5" r="0.95" fill="#333"/><circle cx="9.7" cy="7.5" r="0.95" fill="#333"/></svg></div><div class="img" style="left:65px;top:0;width:47px;height:46.6px"><svg width="47" height="46.6" viewBox="0 0 100 100" preserveAspectRatio="none" style="display:block"><rect width="100" height="100" fill="#2a3070"/><rect x="0" y="0" width="100" height="5" fill="#a0a070"/><rect x="0" y="5" width="100" height="5" fill="#3a3a80"/><rect x="0" y="10" width="100" height="5" fill="#c86aa8"/><rect x="8" y="10.5" width="10" height="4.0" fill="#f0f0f0"/><rect x="38" y="10.5" width="12" height="4.0" fill="#f0f0f0"/><rect x="68" y="10.5" width="12" height="4.0" fill="#f0f0f0"/><rect x="0" y="16" width="100" height="2" fill="#d0c040"/><rect x="0" y="18" width="100" height="12" fill="#343a78"/><rect x="0" y="32" width="100" height="3" fill="#3a6a80"/><rect x="0" y="38" width="100" height="5" fill="#c86aa8"/><rect x="5" y="38.5" width="11" height="4.0" fill="#f0f0f0"/><rect x="33" y="38.5" width="13" height="4.0" fill="#f0f0f0"/><rect x="63" y="38.5" width="13" height="4.0" fill="#f0f0f0"/><rect x="0" y="44" width="100" height="2" fill="#d0c040"/><rect x="0" y="46" width="100" height="10" fill="#3a3a68"/><rect x="0" y="57" width="100" height="2" fill="#a0a070"/><rect x="0" y="62" width="20" height="5" fill="#c86aa8"/><rect x="20" y="62" width="20" height="5" fill="#3a3a80"/><rect x="40" y="62" width="60" height="5" fill="#c86aa8"/><rect x="38" y="62.5" width="8" height="4.0" fill="#f0f0f0"/><rect x="74" y="62.5" width="8" height="4.0" fill="#f0f0f0"/><rect x="0" y="69" width="70" height="2" fill="#d0c040"/><rect x="0" y="71" width="100" height="13" fill="#2c2c64"/><rect x="0" y="84" width="100" height="16" fill="#a0a864"/></svg></div><div class="t" style="top:9.3px"><span style="letter-spacing:-0.15px">bwv 155.1 &nbsp;"Mein Gott,</span><br>wie lang, ach lange"</div><div class="tag" style="top:16.8px">Musik</div><div class="dt" style="top:16.8px">2014-12-11</div></div>
<div class="row" style="top:682.98px;height:46.60px"><svg class="fs" style="top:13px" width="10" height="10" viewBox="0 0 10 10"><path d="M0.8 3.8V0.8h3M6.2 0.8h3v3M9.2 6.2v3h-3M3.8 9.2h-3v-3" stroke="#3a86d6" stroke-width="1.6" fill="none"/></svg><div class="dots" style="top:10.5px"><svg width="15" height="15" viewBox="0 0 15 15" style="position:absolute;left:0;top:0"><circle cx="5.3" cy="7.5" r="0.95" fill="#333"/><circle cx="7.5" cy="7.5" r="0.95" fill="#333"/><circle cx="9.7" cy="7.5" r="0.95" fill="#333"/></svg></div><div class="img" style="left:65px;top:0;width:47px;height:46.6px"><svg width="47" height="46.6" viewBox="0 0 100 100" preserveAspectRatio="none" style="display:block"><rect width="100" height="100" fill="#6a4a6a"/><rect x="20.9" y="65.5" width="11.0" height="4.0" fill="#c84040"/><rect x="81.9" y="61.1" width="6.8999999999999915" height="3.6000000000000014" fill="#4a6ac8"/><rect x="24.5" y="40.2" width="12.5" height="4.899999999999999" fill="#8a4a9a"/><rect x="3.5" y="76.4" width="11.7" height="4.5" fill="#2a3a80"/><rect x="89.9" y="76.4" width="11.799999999999997" height="3.3999999999999915" fill="#50a060"/><rect x="51.4" y="40.0" width="10.899999999999999" height="3.8999999999999986" fill="#d04a50"/><rect x="29.6" y="56.5" width="10.0" height="4.0" fill="#2a3a80"/><rect x="69.8" y="10.5" width="7.700000000000003" height="3.5999999999999996" fill="#3a5ab0"/><rect x="12.9" y="32.6" width="8.6" height="3.799999999999997" fill="#2a3a80"/><rect x="8.1" y="46.1" width="11.299999999999999" height="4.600000000000001" fill="#50a060"/><rect x="8.1" y="40.0" width="11.500000000000002" height="3.200000000000003" fill="#3a5ab0"/><rect x="88.3" y="1.3" width="6.400000000000006" height="3.9000000000000004" fill="#f0f0e0"/><rect x="36.3" y="83.8" width="12.700000000000003" height="2.6000000000000085" fill="#6a3a7a"/><rect x="32.5" y="68.7" width="6.899999999999999" height="4.099999999999994" fill="#e0c840"/><rect x="56.7" y="55.1" width="10.200000000000003" height="3.6999999999999957" fill="#6a3a7a"/><rect x="13.2" y="16.3" width="6.5" height="4.699999999999999" fill="#4a6ac8"/><rect x="37.9" y="56.5" width="12.399999999999999" height="4.899999999999999" fill="#8a4a9a"/><rect x="59.5" y="49.7" width="7.700000000000003" height="2.299999999999997" fill="#e8d870"/><rect x="21.9" y="56.7" width="12.700000000000003" height="3.5999999999999943" fill="#f0f0e0"/><rect x="-1.4" y="29.0" width="6.800000000000001" height="2.6000000000000014" fill="#3a5ab0"/><rect x="74.9" y="34.6" width="7.299999999999997" height="4.199999999999996" fill="#c84040"/><rect x="63.4" y="81.9" width="7.199999999999996" height="3.0999999999999943" fill="#50a060"/><rect x="23.7" y="17.4" width="9.2" height="2.900000000000002" fill="#8a4a9a"/><rect x="1.9" y="1.6" width="9.299999999999999" height="2.4999999999999996" fill="#2a3a80"/><rect x="50.5" y="30.3" width="6.299999999999997" height="4.800000000000001" fill="#d04a50"/><rect x="0.3" y="33.9" width="8.5" height="2.8999999999999986" fill="#2a3a80"/><rect x="-1.7" y="9.8" width="10.299999999999999" height="3.799999999999999" fill="#3a5ab0"/><rect x="38.4" y="32.1" width="13.100000000000001" height="3.0" fill="#8a4a9a"/><rect x="49.5" y="9.6" width="11.200000000000003" height="4.700000000000001" fill="#e0c840"/><rect x="4.0" y="90.2" width="6.9" height="4.3999999999999915" fill="#e8d870"/><rect x="66.8" y="63.7" width="8.600000000000009" height="2.5" fill="#3a5ab0"/><rect x="0.4" y="51.7" width="11.9" height="4.799999999999997" fill="#e0c840"/><rect x="32.1" y="36.7" width="8.299999999999997" height="2.6999999999999957" fill="#e8d870"/><rect x="88.2" y="13.7" width="14.0" height="4.600000000000001" fill="#e8d870"/><rect x="75.9" y="39.4" width="5.3999999999999915" height="4.800000000000004" fill="#2a3a80"/><rect x="4.5" y="37.6" width="12.0" height="2.799999999999997" fill="#d04a50"/><rect x="40.0" y="-2.6" width="7.100000000000001" height="2.8000000000000003" fill="#e8d870"/><rect x="94.2" y="92.4" width="14.0" height="3.1999999999999886" fill="#6a3a7a"/><rect x="71.2" y="45.4" width="13.599999999999994" height="3.700000000000003" fill="#3a5ab0"/><rect x="41.3" y="73.6" width="13.200000000000003" height="2.1000000000000085" fill="#50a060"/><rect x="43.2" y="47.1" width="7.799999999999997" height="3.6999999999999957" fill="#d8b830"/><rect x="83.5" y="46.7" width="11.700000000000003" height="2.5999999999999943" fill="#8a4a9a"/><rect x="59.9" y="39.8" width="11.100000000000001" height="4.400000000000006" fill="#8a4a9a"/><rect x="24.8" y="58.9" width="7.300000000000001" height="4.800000000000004" fill="#d04a50"/><rect x="43.6" y="57.8" width="13.100000000000001" height="3.700000000000003" fill="#8a4a9a"/><rect x="85.7" y="62.3" width="9.599999999999994" height="2.700000000000003" fill="#d04a50"/><rect x="-3.7" y="33.9" width="12.5" height="4.399999999999999" fill="#f0f0e0"/><rect x="63.1" y="69.1" width="6.199999999999996" height="2.8000000000000114" fill="#4a6ac8"/><rect x="67.6" y="56.7" width="9.600000000000009" height="3.799999999999997" fill="#e0c840"/><rect x="72.5" y="84.6" width="9.599999999999994" height="4.400000000000006" fill="#3a5ab0"/><rect x="1.7" y="82.9" width="11.100000000000001" height="3.0" fill="#2a3a80"/><rect x="86.3" y="65.4" width="13.400000000000006" height="4.299999999999997" fill="#4a6ac8"/><rect x="25.0" y="89.8" width="9.299999999999997" height="3.200000000000003" fill="#f0f0e0"/><rect x="84.4" y="3.1" width="8.0" height="2.4" fill="#d8b830"/><rect x="25.0" y="93.8" width="10.700000000000003" height="2.1000000000000085" fill="#e8d870"/><rect x="82.6" y="72.0" width="10.700000000000003" height="3.5999999999999943" fill="#4a6ac8"/><rect x="26.3" y="96.2" width="7.099999999999998" height="2.0999999999999943" fill="#e0c840"/><rect x="51.5" y="85.4" width="12.200000000000003" height="4.099999999999994" fill="#d04a50"/><rect x="80.3" y="12.5" width="9.700000000000003" height="3.6000000000000014" fill="#d8b830"/><rect x="73.2" y="14.4" width="7.700000000000003" height="2.9000000000000004" fill="#d04a50"/><rect x="21.2" y="77.6" width="7.5" height="4.700000000000003" fill="#d04a50"/><rect x="66.6" y="6.7" width="6.0" height="2.1000000000000005" fill="#c84040"/><rect x="70.3" y="12.0" width="9.400000000000006" height="2.3000000000000007" fill="#2a3a80"/><rect x="54.9" y="1.6" width="9.300000000000004" height="2.4" fill="#d04a50"/><rect x="42.8" y="81.1" width="5.900000000000006" height="2.3000000000000114" fill="#f0f0e0"/><rect x="74.8" y="78.8" width="11.299999999999997" height="4.799999999999997" fill="#d04a50"/><rect x="58.2" y="11.0" width="5.199999999999996" height="4.699999999999999" fill="#d04a50"/><rect x="31.2" y="72.2" width="6.5000000000000036" height="2.3999999999999915" fill="#4a6ac8"/><rect x="11.9" y="39.7" width="9.499999999999998" height="4.299999999999997" fill="#f0f0e0"/><rect x="50.2" y="78.7" width="8.5" height="4.3999999999999915" fill="#d04a50"/><rect x="34.4" y="88.2" width="8.600000000000001" height="3.5999999999999943" fill="#4a6ac8"/><rect x="78.4" y="56.4" width="9.799999999999997" height="3.3000000000000043" fill="#3a5ab0"/><rect x="70.0" y="69.3" width="6.700000000000003" height="3.6000000000000085" fill="#8a4a9a"/><rect x="19.1" y="40.5" width="8.2" height="2.1000000000000014" fill="#d04a50"/><rect x="69.0" y="42.9" width="6.900000000000006" height="3.3000000000000043" fill="#c84040"/><rect x="70.4" y="36.3" width="11.599999999999994" height="4.400000000000006" fill="#50a060"/><rect x="51.4" y="39.3" width="11.5" height="3.3000000000000043" fill="#d8b830"/><rect x="56.2" y="37.2" width="9.099999999999994" height="4.599999999999994" fill="#c84040"/><rect x="44.2" y="46.0" width="9.599999999999994" height="4.799999999999997" fill="#4a6ac8"/><rect x="45.8" y="3.0" width="6.100000000000001" height="2.7" fill="#c84040"/><rect x="37.0" y="90.5" width="8.700000000000003" height="3.5" fill="#3a5ab0"/><rect x="-0.8" y="24.7" width="12.100000000000001" height="2.400000000000002" fill="#c84040"/><rect x="67.0" y="-1.3" width="9.299999999999997" height="2.5" fill="#2a3a80"/><rect x="14.4" y="96.3" width="11.999999999999998" height="2.200000000000003" fill="#e0c840"/><rect x="1.5" y="56.5" width="13.2" height="2.6000000000000014" fill="#c84040"/><rect x="68.2" y="35.2" width="14.0" height="4.0" fill="#3a5ab0"/><rect x="9.3" y="59.9" width="12.5" height="4.600000000000001" fill="#c84040"/><rect x="52.9" y="90.8" width="8.899999999999999" height="3.5" fill="#4a6ac8"/><rect x="76.2" y="37.0" width="12.0" height="2.799999999999997" fill="#2a3a80"/><rect x="-4.4" y="73.4" width="11.5" height="2.799999999999997" fill="#c84040"/><rect x="41.4" y="18.8" width="13.300000000000004" height="4.0" fill="#8a4a9a"/><rect x="7.8" y="30.0" width="7.3999999999999995" height="4.100000000000001" fill="#8a4a9a"/><rect x="8.8" y="84.9" width="5.699999999999999" height="4.5" fill="#4a6ac8"/><rect x="88.7" y="5.5" width="9.399999999999991" height="4.199999999999999" fill="#c84040"/><rect x="52.2" y="54.5" width="8.0" height="4.899999999999999" fill="#d8b830"/><rect x="68.7" y="31.5" width="12.899999999999991" height="4.600000000000001" fill="#d04a50"/><rect x="54.5" y="92.0" width="10.299999999999997" height="2.299999999999997" fill="#e0c840"/><rect x="63.7" y="25.5" width="9.5" height="4.5" fill="#d04a50"/><rect x="5.3" y="50.6" width="13.8" height="2.8999999999999986" fill="#4a6ac8"/><rect x="42.2" y="65.3" width="7.799999999999997" height="3.4000000000000057" fill="#4a6ac8"/><rect x="59.1" y="57.2" width="13.499999999999993" height="2.0" fill="#6a3a7a"/><rect x="-2.9" y="13.6" width="11.700000000000001" height="4.200000000000001" fill="#2a3a80"/><rect x="38.0" y="88.2" width="6.399999999999999" height="2.0999999999999943" fill="#f0f0e0"/><rect x="70.1" y="74.0" width="11.5" height="2.9000000000000057" fill="#50a060"/><rect x="43.0" y="-0.7" width="7.0" height="2.2" fill="#e0c840"/><rect x="30.6" y="86.3" width="11.699999999999996" height="2.1000000000000085" fill="#2a3a80"/><rect x="14.0" y="91.7" width="11.600000000000001" height="3.700000000000003" fill="#4a6ac8"/><rect x="8.8" y="38.7" width="7.300000000000001" height="2.8999999999999986" fill="#2a3a80"/><rect x="64.3" y="25.3" width="13.0" height="2.3999999999999986" fill="#d04a50"/><rect x="5.5" y="17.6" width="13.8" height="4.099999999999998" fill="#c84040"/><rect x="29.6" y="21.8" width="11.199999999999996" height="2.3999999999999986" fill="#6a3a7a"/><rect x="91.4" y="43.7" width="10.099999999999994" height="2.1999999999999957" fill="#d04a50"/><rect x="45.8" y="23.2" width="5.600000000000001" height="3.400000000000002" fill="#d04a50"/><rect x="9.5" y="81.1" width="8.2" height="3.9000000000000057" fill="#d8b830"/><rect x="53.0" y="38.5" width="6.899999999999999" height="2.299999999999997" fill="#c84040"/><rect x="85.3" y="89.7" width="6.900000000000006" height="3.799999999999997" fill="#4a6ac8"/><rect x="61.8" y="60.3" width="5.700000000000003" height="3.200000000000003" fill="#50a060"/><rect x="22.0" y="66.6" width="9.5" height="4.400000000000006" fill="#e0c840"/><rect x="22.5" y="15.1" width="11.899999999999999" height="4.700000000000001" fill="#6a3a7a"/><rect x="77.2" y="1.4" width="11.799999999999997" height="4.9" fill="#c84040"/><rect x="81.5" y="86.7" width="5.799999999999997" height="2.0999999999999943" fill="#6a3a7a"/><rect x="52.4" y="43.5" width="13.500000000000007" height="2.299999999999997" fill="#d04a50"/><rect x="91.7" y="94.7" width="8.700000000000003" height="2.0" fill="#8a4a9a"/><rect x="12.2" y="17.3" width="8.0" height="4.899999999999999" fill="#c84040"/><rect x="49.2" y="40.2" width="13.0" height="3.6999999999999957" fill="#f0f0e0"/><rect x="78.1" y="2.4" width="10.200000000000003" height="4.699999999999999" fill="#4a6ac8"/><rect x="20.5" y="87.4" width="12.799999999999997" height="3.3999999999999915" fill="#4a6ac8"/><rect x="68.2" y="41.2" width="12.799999999999997" height="3.799999999999997" fill="#50a060"/><rect x="47.8" y="38.5" width="7.900000000000006" height="3.1000000000000014" fill="#2a3a80"/><rect x="58.2" y="0.3" width="9.799999999999997" height="4.4" fill="#d04a50"/><rect x="77.2" y="80.1" width="10.799999999999997" height="3.200000000000003" fill="#50a060"/><rect x="0.0" y="45.0" width="8.0" height="4.200000000000003" fill="#8a4a9a"/><rect x="82.2" y="88.6" width="5.5" height="2.200000000000003" fill="#f0f0e0"/><rect x="68.6" y="63.8" width="5.200000000000003" height="3.700000000000003" fill="#4a6ac8"/><rect x="41.2" y="93.4" width="6.599999999999994" height="4.8999999999999915" fill="#d8b830"/><rect x="-1.2" y="9.6" width="10.2" height="4.200000000000001" fill="#8a4a9a"/><rect x="39.6" y="66.1" width="5.399999999999999" height="2.700000000000003" fill="#f0f0e0"/><rect x="-3.8" y="24.4" width="6.3" height="3.6000000000000014" fill="#3a5ab0"/><rect x="5.4" y="64.1" width="13.499999999999998" height="2.1000000000000085" fill="#8a4a9a"/><rect x="22.8" y="60.4" width="7.5" height="2.700000000000003" fill="#6a3a7a"/><rect x="17.5" y="29.4" width="9.8" height="2.400000000000002" fill="#8a4a9a"/><rect x="91.0" y="63.8" width="5.5" height="4.0" fill="#3a5ab0"/><rect x="0.7" y="64.8" width="5.8999999999999995" height="4.700000000000003" fill="#e8d870"/><rect x="59.5" y="67.4" width="10.299999999999997" height="3.3999999999999915" fill="#2a3a80"/><rect x="72.9" y="9.7" width="8.5" height="2.5" fill="#2a3a80"/><rect x="29.9" y="43.4" width="12.0" height="2.1000000000000014" fill="#50a060"/><rect x="19.1" y="48.7" width="6.199999999999999" height="2.1999999999999957" fill="#c84040"/><rect x="59.4" y="77.0" width="9.600000000000001" height="4.900000000000006" fill="#3a5ab0"/><rect x="31.4" y="17.8" width="8.5" height="3.599999999999998" fill="#d04a50"/><rect x="20.1" y="81.5" width="7.899999999999999" height="4.200000000000003" fill="#d04a50"/><rect x="10.8" y="2.7" width="11.0" height="4.0" fill="#3a5ab0"/><rect x="80.9" y="38.2" width="6.8999999999999915" height="4.099999999999994" fill="#2a3a80"/><rect x="69.6" y="48.3" width="7.0" height="2.1000000000000014" fill="#8a4a9a"/><rect x="41.8" y="68.4" width="9.700000000000003" height="2.8999999999999915" fill="#3a5ab0"/><rect x="15.4" y="46.1" width="10.999999999999998" height="3.5" fill="#2a3a80"/><rect x="61.4" y="61.8" width="8.000000000000007" height="4.5" fill="#6a3a7a"/><rect x="64.6" y="19.8" width="6.6000000000000085" height="3.0" fill="#50a060"/><rect x="48.2" y="43.8" width="8.399999999999999" height="3.1000000000000014" fill="#3a5ab0"/><rect x="65.5" y="85.3" width="13.700000000000003" height="2.1000000000000085" fill="#3a5ab0"/><rect x="4.5" y="52.2" width="5.4" height="2.6999999999999957" fill="#4a6ac8"/><rect x="90.9" y="42.7" width="6.099999999999994" height="3.5999999999999943" fill="#d04a50"/><rect x="80.5" y="96.6" width="7.799999999999997" height="4.900000000000006" fill="#8a4a9a"/><rect x="28.4" y="9.2" width="12.600000000000001" height="3.8000000000000007" fill="#c84040"/><rect x="49.5" y="78.5" width="10.200000000000003" height="2.5" fill="#c84040"/><rect x="64.2" y="14.8" width="7.299999999999997" height="2.599999999999998" fill="#3a5ab0"/><rect x="56.8" y="32.8" width="7.200000000000003" height="4.5" fill="#50a060"/><rect x="62.5" y="8.5" width="12.400000000000006" height="3.5999999999999996" fill="#8a4a9a"/><rect x="59.8" y="86.9" width="7.200000000000003" height="2.1999999999999886" fill="#2a3a80"/><rect x="-0.6" y="83.5" width="11.299999999999999" height="4.799999999999997" fill="#d8b830"/><rect x="94.5" y="61.8" width="8.099999999999994" height="4.6000000000000085" fill="#50a060"/><rect x="11.2" y="1.8" width="13.5" height="3.5" fill="#e0c840"/><rect x="89.7" y="1.9" width="5.700000000000003" height="3.9" fill="#4a6ac8"/><rect x="16.0" y="64.7" width="10.8" height="2.5" fill="#2a3a80"/><rect x="45.3" y="9.6" width="5.900000000000006" height="3.5999999999999996" fill="#6a3a7a"/><rect x="94.0" y="7.9" width="5.5" height="3.0999999999999996" fill="#4a6ac8"/><rect x="41.6" y="54.9" width="5.5" height="2.700000000000003" fill="#8a4a9a"/><rect x="67.8" y="43.3" width="5.400000000000006" height="3.5" fill="#2a3a80"/><rect x="40.8" y="28.7" width="12.100000000000001" height="4.900000000000002" fill="#50a060"/><rect x="92.3" y="76.3" width="6.900000000000006" height="2.4000000000000057" fill="#50a060"/><rect x="45.6" y="9.3" width="13.600000000000001" height="4.899999999999999" fill="#50a060"/><rect x="49.4" y="81.3" width="8.399999999999999" height="2.5" fill="#2a3a80"/><rect x="66.3" y="27.3" width="7.400000000000006" height="3.0" fill="#4a6ac8"/><rect x="10.7" y="96.3" width="12.900000000000002" height="3.5" fill="#4a6ac8"/><rect x="16.6" y="11.7" width="6.0" height="4.400000000000002" fill="#e0c840"/><rect x="-4.9" y="95.9" width="7.1000000000000005" height="2.799999999999997" fill="#2a3a80"/><rect x="21.1" y="78.2" width="10.099999999999998" height="2.5" fill="#e0c840"/><rect x="27.9" y="45.2" width="10.0" height="3.3999999999999986" fill="#50a060"/><rect x="92.0" y="11.1" width="9.799999999999997" height="2.8000000000000007" fill="#2a3a80"/><rect x="2.8" y="3.8" width="7.3999999999999995" height="2.8" fill="#2a3a80"/><rect x="88.3" y="28.0" width="6.400000000000006" height="3.5" fill="#3a5ab0"/><rect x="-0.2" y="74.4" width="8.1" height="3.3999999999999915" fill="#4a6ac8"/><rect x="7.9" y="55.5" width="8.4" height="3.5" fill="#6a3a7a"/><rect x="94.6" y="6.5" width="12.600000000000009" height="4.1" fill="#f0f0e0"/><rect x="19.1" y="82.1" width="5.599999999999998" height="2.5" fill="#d8b830"/><rect x="64.9" y="94.9" width="5.699999999999989" height="4.099999999999994" fill="#c84040"/><rect x="15.8" y="36.6" width="12.8" height="3.1000000000000014" fill="#6a3a7a"/><rect x="-2.2" y="16.3" width="13.0" height="3.8999999999999986" fill="#c84040"/><rect x="30.0" y="61.1" width="11.100000000000001" height="2.299999999999997" fill="#c84040"/><rect x="37.9" y="36.6" width="8.0" height="2.6000000000000014" fill="#50a060"/><rect x="3.7" y="74.1" width="10.3" height="2.700000000000003" fill="#8a4a9a"/><rect x="-1.8" y="18.1" width="9.9" height="3.799999999999997" fill="#c84040"/><rect x="11.1" y="47.2" width="9.000000000000002" height="3.0999999999999943" fill="#3a5ab0"/><rect x="82.1" y="1.5" width="10.200000000000003" height="4.4" fill="#4a6ac8"/><rect x="7.3" y="64.7" width="11.7" height="4.8999999999999915" fill="#2a3a80"/><rect x="73.9" y="82.3" width="10.299999999999997" height="3.200000000000003" fill="#e8d870"/><rect x="5.8" y="85.1" width="10.3" height="3.3000000000000114" fill="#3a5ab0"/><rect x="47.3" y="74.6" width="12.400000000000006" height="4.900000000000006" fill="#6a3a7a"/><rect x="63.1" y="14.9" width="10.399999999999999" height="3.799999999999999" fill="#8a4a9a"/><rect x="17.2" y="82.8" width="6.400000000000002" height="2.1000000000000085" fill="#3a5ab0"/><rect x="64.6" y="37.4" width="5.900000000000006" height="2.8000000000000043" fill="#50a060"/><rect x="87.3" y="41.1" width="8.5" height="4.899999999999999" fill="#8a4a9a"/><rect x="8.8" y="57.0" width="12.5" height="3.3999999999999986" fill="#3a5ab0"/><rect x="3.1" y="2.2" width="9.700000000000001" height="4.0" fill="#50a060"/><rect x="32.3" y="70.3" width="5.900000000000006" height="2.700000000000003" fill="#50a060"/><rect x="20.1" y="93.1" width="9.599999999999998" height="4.300000000000011" fill="#e8d870"/><rect x="62.0" y="26.3" width="11.299999999999997" height="3.099999999999998" fill="#4a6ac8"/><rect x="35.5" y="18.1" width="13.700000000000003" height="2.299999999999997" fill="#c84040"/><rect x="3.1" y="61.5" width="8.200000000000001" height="2.799999999999997" fill="#50a060"/><rect x="84.3" y="42.8" width="12.299999999999997" height="3.5" fill="#c84040"/><rect x="54.9" y="80.0" width="12.199999999999996" height="4.799999999999997" fill="#c84040"/><rect x="35.3" y="0.0" width="12.0" height="2.9" fill="#e8d870"/><rect x="36.2" y="16.4" width="6.399999999999999" height="3.700000000000003" fill="#4a6ac8"/><rect x="60.9" y="42.6" width="7.100000000000001" height="4.199999999999996" fill="#c84040"/><rect x="27.7" y="25.0" width="5.099999999999998" height="3.8999999999999986" fill="#50a060"/><rect x="49.4" y="71.3" width="13.100000000000001" height="3.700000000000003" fill="#c84040"/><rect x="-2.6" y="7.7" width="10.0" height="2.3" fill="#d8b830"/><rect x="74.3" y="37.2" width="13.400000000000006" height="4.699999999999996" fill="#8a4a9a"/><rect x="-2.0" y="61.1" width="13.4" height="4.699999999999996" fill="#6a3a7a"/><rect x="76.3" y="67.6" width="5.5" height="2.6000000000000085" fill="#d04a50"/><rect x="51.2" y="40.6" width="6.199999999999996" height="3.1999999999999957" fill="#2a3a80"/><rect x="85.5" y="-2.7" width="8.099999999999994" height="2.3000000000000003" fill="#e0c840"/><rect x="26.7" y="28.9" width="6.800000000000001" height="4.0" fill="#3a5ab0"/><rect x="80.4" y="2.4" width="8.699999999999989" height="2.0000000000000004" fill="#8a4a9a"/><rect x="86.1" y="6.8" width="5.6000000000000085" height="4.1000000000000005" fill="#c84040"/><rect x="72.0" y="31.1" width="8.599999999999994" height="3.0" fill="#6a3a7a"/><rect x="36.1" y="7.0" width="9.0" height="4.9" fill="#d04a50"/><rect x="49.8" y="61.0" width="13.700000000000003" height="4.5" fill="#6a3a7a"/><rect x="39.2" y="51.8" width="13.399999999999999" height="3.0" fill="#4a6ac8"/><rect x="82.8" y="79.0" width="7.200000000000003" height="3.5999999999999943" fill="#d04a50"/><rect x="63.6" y="38.5" width="7.499999999999993" height="4.600000000000001" fill="#4a6ac8"/><rect x="48.1" y="38.0" width="12.399999999999999" height="4.799999999999997" fill="#6a3a7a"/><rect x="6.2" y="55.7" width="6.7" height="2.1999999999999957" fill="#c84040"/><rect x="74.7" y="75.0" width="12.5" height="3.9000000000000057" fill="#4a6ac8"/><rect x="22.1" y="72.9" width="10.399999999999999" height="3.6999999999999886" fill="#d04a50"/><rect x="23.9" y="-2.6" width="7.800000000000001" height="3.3" fill="#50a060"/><rect x="20.5" y="-2.8" width="13.700000000000003" height="3.6999999999999997" fill="#50a060"/><rect x="63.4" y="26.7" width="10.899999999999999" height="2.1999999999999993" fill="#2a3a80"/><rect x="85.9" y="83.6" width="7.699999999999989" height="4.800000000000011" fill="#f0f0e0"/><rect x="30.5" y="26.4" width="6.700000000000003" height="3.5" fill="#4a6ac8"/><rect x="88.2" y="-2.1" width="12.599999999999994" height="2.2" fill="#50a060"/><rect x="82.7" y="1.0" width="12.099999999999994" height="4.5" fill="#50a060"/><rect x="60.9" y="37.1" width="12.199999999999996" height="3.6000000000000014" fill="#3a5ab0"/><rect x="30.3" y="75.2" width="8.999999999999996" height="2.200000000000003" fill="#c84040"/><rect x="17.0" y="96.5" width="5.600000000000001" height="3.4000000000000057" fill="#f0f0e0"/><rect x="58.8" y="84.3" width="13.600000000000009" height="3.6000000000000085" fill="#6a3a7a"/><rect x="78.4" y="4.0" width="8.199999999999989" height="3.5" fill="#f0f0e0"/><rect x="84.0" y="21.9" width="6.5" height="3.1000000000000014" fill="#e0c840"/><rect x="80.3" y="80.9" width="11.100000000000009" height="2.0999999999999943" fill="#6a3a7a"/><rect x="1.3" y="79.2" width="7.3" height="3.299999999999997" fill="#f0f0e0"/><rect x="21.1" y="13.1" width="11.199999999999996" height="3.0999999999999996" fill="#d04a50"/><rect x="73.5" y="66.4" width="9.200000000000003" height="4.799999999999997" fill="#c84040"/><rect x="54.4" y="38.4" width="5.399999999999999" height="3.0" fill="#6a3a7a"/><rect x="62.5" y="16.7" width="5.0" height="3.8000000000000007" fill="#3a5ab0"/><rect x="94.9" y="40.8" width="13.199999999999989" height="3.6000000000000014" fill="#d8b830"/><rect x="28.1" y="79.7" width="12.5" height="2.8999999999999915" fill="#c84040"/><rect x="23.1" y="15.4" width="8.5" height="3.799999999999999" fill="#e0c840"/><rect x="90.5" y="9.4" width="7.799999999999997" height="2.799999999999999" fill="#c84040"/><rect x="68.9" y="36.9" width="11.799999999999997" height="3.8999999999999986" fill="#c84040"/><rect x="-4.5" y="77.9" width="7.7" height="3.0" fill="#4a6ac8"/><rect x="76.8" y="14.6" width="5.799999999999997" height="2.299999999999999" fill="#d04a50"/><rect x="25.1" y="84.0" width="13.399999999999999" height="4.0" fill="#e8d870"/><rect x="11.3" y="58.1" width="9.0" height="4.699999999999996" fill="#c84040"/><rect x="7.1" y="48.2" width="7.6" height="2.5999999999999943" fill="#2a3a80"/><rect x="93.4" y="45.6" width="7.5" height="3.799999999999997" fill="#50a060"/><rect x="86.4" y="73.7" width="7.0" height="4.799999999999997" fill="#3a5ab0"/><rect x="8.6" y="50.7" width="12.6" height="3.5999999999999943" fill="#3a5ab0"/><rect x="58.8" y="71.0" width="9.799999999999997" height="3.9000000000000057" fill="#d04a50"/><rect x="49.6" y="55.5" width="7.699999999999996" height="3.299999999999997" fill="#3a5ab0"/><rect x="58.1" y="93.6" width="11.199999999999996" height="3.6000000000000085" fill="#d04a50"/><rect x="76.8" y="-2.1" width="9.100000000000009" height="3.7" fill="#3a5ab0"/><rect x="76.7" y="55.1" width="7.799999999999997" height="2.3999999999999986" fill="#c84040"/><rect x="5.0" y="-2.9" width="8.6" height="3.5" fill="#50a060"/><rect x="5.7" y="80.4" width="13.600000000000001" height="3.299999999999997" fill="#c84040"/><rect x="34.2" y="43.2" width="9.299999999999997" height="4.699999999999996" fill="#4a6ac8"/><rect x="16.0" y="64.3" width="10.0" height="2.1000000000000085" fill="#2a3a80"/><rect x="82.6" y="-1.6" width="13.100000000000009" height="3.4000000000000004" fill="#f0f0e0"/><rect x="8.4" y="71.2" width="13.700000000000001" height="2.3999999999999915" fill="#3a5ab0"/><rect x="13.4" y="0.4" width="6.299999999999999" height="2.9" fill="#2a3a80"/><rect x="72.2" y="52.2" width="11.299999999999997" height="2.299999999999997" fill="#3a5ab0"/><rect x="58.3" y="32.8" width="7.400000000000006" height="4.600000000000001" fill="#c84040"/><rect x="62.5" y="-1.5" width="13.799999999999997" height="2.5" fill="#3a5ab0"/><rect x="-3.5" y="73.8" width="10.0" height="2.6000000000000085" fill="#50a060"/><rect x="49.5" y="60.5" width="11.399999999999999" height="2.1000000000000014" fill="#50a060"/><rect x="84.6" y="59.0" width="6.900000000000006" height="2.6000000000000014" fill="#d8b830"/><rect x="93.8" y="91.5" width="7.299999999999997" height="3.799999999999997" fill="#3a5ab0"/><rect x="46.3" y="63.1" width="8.300000000000004" height="3.499999999999993" fill="#e8d870"/><rect x="16.4" y="63.9" width="12.900000000000002" height="2.3999999999999986" fill="#e0c840"/><rect x="69.0" y="26.2" width="13.700000000000003" height="3.6999999999999993" fill="#d04a50"/><rect x="38.3" y="24.8" width="10.5" height="2.3000000000000007" fill="#e0c840"/><rect x="-0.1" y="23.0" width="13.1" height="3.3999999999999986" fill="#50a060"/></svg></div><div class="t" style="top:16.3px;letter-spacing:-0.2px">bwv 12.3</div><div class="tag" style="top:16.8px">Musik</div><div class="dt" style="top:16.8px">2008-10-02</div></div>
<div class="row" style="top:732.27px;height:46.60px"><svg class="fs" style="top:13px" width="10" height="10" viewBox="0 0 10 10"><path d="M0.8 3.8V0.8h3M6.2 0.8h3v3M9.2 6.2v3h-3M3.8 9.2h-3v-3" stroke="#3a86d6" stroke-width="1.6" fill="none"/></svg><div class="dots" style="top:10.5px"><svg width="15" height="15" viewBox="0 0 15 15" style="position:absolute;left:0;top:0"><circle cx="5.3" cy="7.5" r="0.95" fill="#333"/><circle cx="7.5" cy="7.5" r="0.95" fill="#333"/><circle cx="9.7" cy="7.5" r="0.95" fill="#333"/></svg></div><div class="img" style="left:65px;top:0;width:47px;height:46.6px"><svg width="47" height="46.6" viewBox="0 0 100 100" preserveAspectRatio="none" style="display:block"><rect width="100" height="100" fill="#1a1a1a"/><rect x="0" y="0" width="100" height="3" fill="#40a0c0"/><rect x="0" y="97" width="100" height="3" fill="#40a0c0"/><rect x="15" y="8" width="25" height="5" fill="#f08020"/><rect x="45" y="8" width="25" height="5" fill="#f08020"/><rect x="75" y="8" width="25" height="5" fill="#f08020"/><rect x="10" y="13" width="85" height="4" fill="#e04070"/><rect x="5" y="19" width="55" height="4" fill="#a06830"/><rect x="68" y="19" width="32" height="4" fill="#a06830"/><rect x="0" y="30" width="25" height="4" fill="#80a030"/><rect x="70" y="30" width="25" height="4" fill="#80a030"/><rect x="0" y="38" width="25" height="5" fill="#f08020"/><rect x="32" y="38" width="38" height="5" fill="#f08020"/><rect x="75" y="38" width="25" height="5" fill="#f08020"/><rect x="0" y="43" width="100" height="4" fill="#e04070"/><rect x="0" y="47" width="55" height="4" fill="#f08020"/><rect x="60" y="47" width="40" height="4" fill="#f08020"/><rect x="10" y="55" width="90" height="3" fill="#a06830"/><rect x="5" y="66" width="50" height="5" fill="#90e030"/><rect x="75" y="66" width="25" height="5" fill="#90e030"/><rect x="0" y="72" width="20" height="5" fill="#f08020"/><rect x="25" y="72" width="75" height="5" fill="#f08020"/><rect x="15" y="78" width="85" height="5" fill="#e04070"/><rect x="0" y="83" width="100" height="4" fill="#f08020"/><rect x="0" y="89" width="40" height="3" fill="#a06830"/><rect x="45" y="89" width="55" height="3" fill="#a06830"/></svg></div><div class="t up" style="top:16.3px;">BWV 232.7</div><div class="tag" style="top:16.8px">Musik</div><div class="dt" style="top:16.8px">2013-01-16</div></div>
<div class="row" style="top:781.56px;height:46.60px"><svg class="fs" style="top:13px" width="10" height="10" viewBox="0 0 10 10"><path d="M0.8 3.8V0.8h3M6.2 0.8h3v3M9.2 6.2v3h-3M3.8 9.2h-3v-3" stroke="#3a86d6" stroke-width="1.6" fill="none"/></svg><div class="dots" style="top:10.5px"><svg width="15" height="15" viewBox="0 0 15 15" style="position:absolute;left:0;top:0"><circle cx="5.3" cy="7.5" r="0.95" fill="#333"/><circle cx="7.5" cy="7.5" r="0.95" fill="#333"/><circle cx="9.7" cy="7.5" r="0.95" fill="#333"/></svg></div><div class="img" style="left:62px;top:0;width:53px;height:46.6px"><svg width="53" height="46.6" viewBox="0 0 100 100" preserveAspectRatio="none" style="display:block"><rect width="100" height="100" fill="#404050"/><rect x="0" y="0" width="100" height="25" fill="#c8b0b8"/><rect x="0" y="5" width="60" height="7" fill="#d0a0b0"/><rect x="0" y="25" width="100" height="13" fill="#d8d0c8"/><rect x="65" y="25" width="35" height="15" fill="#c8e050"/><rect x="0" y="38" width="100" height="8" fill="#e8d020"/><rect x="0" y="46" width="100" height="10" fill="#d82030"/><rect x="0" y="56" width="100" height="10" fill="#c81838"/><rect x="0" y="66" width="100" height="7" fill="#2a5a70"/><rect x="0" y="73" width="100" height="27" fill="#404050"/></svg></div><div class="t up" style="top:16.3px;">BWV 2327</div><div class="tag" style="top:16.8px">Musik</div><div class="dt" style="top:16.8px">2013-01-31</div></div>
<div class="row" style="top:830.85px;height:11.15px"><div class="img" style="left:66px;top:0;width:45.3px;height:12px"><svg width="45.3" height="12" viewBox="0 0 100 100" preserveAspectRatio="none" style="display:block"><rect width="100" height="100" fill="#404870"/><rect x="0" y="0" width="100" height="18" fill="#30d0a0"/><rect x="0" y="30" width="100" height="10" fill="#c04060"/><rect x="0" y="55" width="60" height="7" fill="#c04060"/></svg></div></div>
 </div>
 <div class="colsep" style="left:58px"></div>
 <div class="colsep" style="left:118px"></div>
 <div class="colsep" style="left:316px"></div>
 <div class="colsep" style="left:434px"></div>
 <div id="ltop"></div>
 <div id="ltool"></div>
 <div id="lhead"></div>

 <svg class="abs" style="left:9.5px;top:9.5px" width="12" height="8" viewBox="0 0 12 8"><path d="M0.8 0.5v7M3 3.8h8.2M3 3.8L5.7 1.1M3 3.8l2.7 2.7" stroke="#4a8fd6" stroke-width="1.1" fill="none"/></svg>
 <div class="abs" style="left:38.5px;top:7px;font-size:10.5px;line-height:14px;letter-spacing:-0.5px;color:#9a9a9a">Bilder</div>
 <div class="abs" style="left:487.5px;top:8.5px;width:12px;height:11px"><svg width="12" height="11" viewBox="0 0 12 11"><path d="M6.5 2H1.2v8h8V5.5" stroke="#5cc87a" stroke-width="1.4" fill="none"/><path d="M4 7.5l0.5-2L10 0.3l1.5 1.5L6 7z" fill="#5cc87a"/></svg></div>
 <div class="abs" style="left:504.8px;top:7px;font-size:10.5px;line-height:14px;letter-spacing:-0.3px;color:#6a6a6a">P1-O122</div>
 <div class="abs" style="left:0;top:27.5px;width:552px;height:1.7px;background:#d0d0d0"></div><div class="abs" style="left:0;top:28px;width:2px;height:29px;background:#d0d0d0"></div><div class="abs" style="left:36.5px;top:29.2px;width:35.5px;height:27.7px;background:#cecece;border-radius:3px"></div>
 <div class="abs" style="left:549.5px;top:28px;width:2.5px;height:29px;background:#cfcfcf"></div>
 <svg class="abs" style="left:14px;top:38px" width="10" height="10" viewBox="0 0 10 10"><g stroke="#6a6a6a" stroke-width="1.1" fill="none"><rect x="0.6" y="0.6" width="3" height="3" rx="1"/><rect x="6.4" y="0.6" width="3" height="3" rx="1"/><rect x="0.6" y="6.4" width="3" height="3" rx="1"/><rect x="6.4" y="6.4" width="3" height="3" rx="1"/></g></svg>
 <svg class="abs" style="left:49.5px;top:38.5px" width="10" height="9" viewBox="0 0 10 9"><g stroke="#222" stroke-width="1.1" fill="none"><rect x="0.6" y="0.6" width="8.4" height="7.8" rx="0.8"/><path d="M0.6 2.6h8.4M3.4 2.6v5.8M6.2 2.6v5.8"/></g></svg>
 <svg class="abs" style="left:84px;top:37px" width="11" height="11" viewBox="0 0 11 11"><g stroke="#222" stroke-width="1.2" fill="none"><rect x="1" y="2" width="9" height="8" rx="0.8"/><path d="M1 4.8h9M3.2 0.5v2.5M7.8 0.5v2.5"/></g></svg>
 <svg class="abs" style="left:119.5px;top:38.5px" width="11" height="11" viewBox="0 0 11 11"><g stroke="#222" stroke-width="1" fill="none"><path d="M0.7 0.7h7.6L5.3 4.3v4.2L3.6 7.6V4.3z"/><circle cx="8" cy="7.6" r="1.2"/><path d="M8.9 8.5l1.3 1.3"/></g></svg>
 <svg class="abs" style="left:154px;top:38px" width="11" height="11" viewBox="0 0 11 11"><g stroke="#222" stroke-width="1" fill="none"><path d="M2 2.6A4.2 4.2 0 1 1 1.1 5.6"/><path d="M0.9 0.9v2.2h2.2"/><path d="M5.4 2.8v2.6l1.7 1.4"/></g></svg>
 <svg class="abs" style="left:189px;top:38px" width="11" height="11" viewBox="0 0 11 11"><g stroke="#222" stroke-width="1" fill="none"><path d="M3.3 7V1M1.7 2.6l1.6-1.6 1.6 1.6M7.4 1v6M5.8 5.4l1.6 1.6 1.6-1.6M0.6 8.2v0.6q0 1 1 1h7.8q1 0 1-1v-0.6"/></g></svg>
 <svg class="abs" style="left:300px;top:64px" width="9" height="6" viewBox="0 0 9 6"><path d="M1 3h7M3 1L1 3l2 2M6 1l2 2-2 2" stroke="#555" stroke-width="0.9" fill="none"/></svg>
 <svg class="abs" style="left:53px;top:73px" width="4" height="4" viewBox="0 0 4 4"><path d="M0.5 3.5L3.5 0.5M0.5 3.5h1" stroke="#444" stroke-width="0.9" fill="none"/></svg>
 <svg class="abs" style="left:115px;top:73px" width="4" height="4" viewBox="0 0 4 4"><path d="M0.5 3.5L3.5 0.5M0.5 3.5h1" stroke="#444" stroke-width="0.9" fill="none"/></svg>
 <svg class="abs" style="left:313px;top:73px" width="4" height="4" viewBox="0 0 4 4"><path d="M0.5 3.5L3.5 0.5M0.5 3.5h1" stroke="#444" stroke-width="0.9" fill="none"/></svg>
 <svg class="abs" style="left:431px;top:73px" width="4" height="4" viewBox="0 0 4 4"><path d="M0.5 3.5L3.5 0.5M0.5 3.5h1" stroke="#444" stroke-width="0.9" fill="none"/></svg>
 <div class="abs" style="left:3px;top:88px;width:92px;height:6px;background:#d4d4d4;box-shadow:0 1px 3px rgba(0,0,0,0.15)"></div>
 <div class="abs" style="left:24px;top:88px;width:6px;height:6px;background:#222"></div>
 <div class="hd" style="left:64px">Titelbild</div>
 <div class="hd" style="left:124.5px">Titel</div>
 <div class="hd" style="left:324.5px">Schlagworte</div>
 <div class="hd" style="left:442px">Datierung</div>
 <div id="lgrey"></div>
 <div id="lfoot"></div>
 <div class="abs" style="left:103.5px;top:879px;width:13px;height:13px;border:1px solid #a8d4f0;border-radius:50%;font-size:7px;line-height:11px;text-align:center;color:#444;background:#fff">6</div>
 <div class="abs" style="left:220px;top:877px;width:29.5px;height:18.5px;border:1px solid #6a6a8a;border-radius:9px 0 0 9px;font-size:10.5px;font-weight:bold;line-height:16.5px;text-align:center;color:#111;background:#fff;letter-spacing:-0.3px">Alle</div>
 <div class="abs" style="left:252.3px;top:877px;width:17.7px;height:18.5px;border:1px solid #6a6a8a;font-size:10.5px;font-weight:bold;line-height:16.5px;text-align:center;color:#fff;background:#5a5a7e">1</div>
 <div class="abs" style="left:272.7px;top:877px;width:18px;height:18.5px;border:1px solid #6a6a8a;font-size:10.5px;font-weight:bold;line-height:16.5px;text-align:center;color:#111;background:#fff">2</div>
 <div class="abs" style="left:293.3px;top:877px;width:18.4px;height:18.5px;border:1px solid #6a6a8a;border-radius:0 9px 9px 0;font-size:10.5px;font-weight:bold;line-height:16.5px;text-align:center;color:#111;background:#fff">3</div>
 <div class="abs" style="left:417.3px;top:877px;width:28.4px;height:18.5px;border:1px solid #6a6a8a;border-radius:9px;background:#fff"><svg class="abs" style="left:9.5px;top:3.8px" width="9" height="10" viewBox="0 0 9 10"><path d="M1.3 2.2Q4.5 0.6 7.7 2.2M1.8 2.5l0.7 6h4l0.7-6M3.4 3.5l0.2 3.5" stroke="#333" stroke-width="1" fill="none"/></svg></div>

</div>
<div id="div"></div>
<div class="abs" style="left:554px;top:439px;width:1px;height:22px;background:#b8b8b8"></div><div class="abs" style="left:556px;top:439px;width:1px;height:22px;background:#b8b8b8"></div>

<div id="right"></div>
<div id="rtop"></div>
<!-- top nav -->
<div class="abs" style="left:590px;top:0;width:1px;height:27px;background:#e6e6dc"></div>
<div class="abs" style="left:724.5px;top:0;width:1px;height:27px;background:#e6e6dc"></div>
<div class="abs" style="left:804px;top:0;width:1px;height:27px;background:#e6e6dc"></div>
<div class="abs" style="left:863.4px;top:0;width:1px;height:27px;background:#e6e6dc"></div>
<div class="abs" style="left:930px;top:0;width:60px;height:27px;background:#efefe6"></div>
<div class="abs" style="left:1045.5px;top:0;width:1px;height:27px;background:#e6e6dc"></div>
<svg class="abs" style="left:568.5px;top:10.5px" width="10" height="7" viewBox="0 0 10 7"><path d="M0.6 3.5C2 1.2 3.5 0.6 5 0.6S8 1.2 9.4 3.5C8 5.8 6.5 6.4 5 6.4S2 5.8 0.6 3.5z" stroke="#222" stroke-width="1" fill="none"/><circle cx="5" cy="3.5" r="1.6" fill="#222"/></svg>
<div class="abs" style="left:601.4px;top:8px;font-size:8.5px;line-height:12px;letter-spacing:-0.2px;color:#c4c4c4">Schnellsuche...</div>
<svg class="abs" style="left:706px;top:9px" width="10" height="10" viewBox="0 0 10 10"><circle cx="4" cy="4" r="3.1" stroke="#777" stroke-width="1.2" fill="none"/><path d="M6.3 6.3l3 3" stroke="#777" stroke-width="1.3"/></svg>
<svg class="abs" style="left:756.5px;top:9px" width="9" height="9" viewBox="0 0 9 9"><g stroke="#444" stroke-width="1" fill="none"><rect x="0.5" y="0.5" width="3.2" height="3.2" rx="1"/><rect x="5.3" y="0.5" width="3.2" height="3.2" rx="1"/><rect x="0.5" y="5.3" width="3.2" height="3.2" rx="1"/><rect x="5.3" y="5.3" width="3.2" height="3.2" rx="1"/></g></svg>
<div class="tb" style="left:768.9px">Galerie</div>
<svg class="abs" style="left:816.5px;top:9.5px" width="9" height="8" viewBox="0 0 9 8"><g stroke="#444" stroke-width="1" fill="none"><rect x="0.5" y="0.5" width="8" height="7"/><path d="M0.5 2.6h8M3.2 2.6v5M5.8 2.6v5"/></g></svg>
<div class="tb" style="left:828.6px">Tabelle</div>
<svg class="abs" style="left:876.5px;top:9px" width="9" height="9" viewBox="0 0 9 9"><g stroke="#444" stroke-width="1" fill="none"><rect x="0.5" y="1.5" width="8" height="7"/><path d="M0.5 3.8h8M2.5 0v2M6.5 0v2"/></g></svg>
<div class="tb" style="left:887.5px;letter-spacing:-0.3px">Kalender</div>
<svg class="abs" style="left:943.5px;top:9px" width="9" height="9" viewBox="0 0 9 9"><g stroke="#333" stroke-width="1.1" fill="none"><path d="M2.5 1h4.5q1 0 1 1v3.5L5.5 8H2q-1 0-1-1V2.5q0-1.5 1.5-1.5z"/></g><path d="M5 8.3L8.3 5 6 5.2 5.2 6z" fill="#333"/></svg>
<div class="tb" style="left:954.7px">Objekt</div>
<svg class="abs" style="left:1003px;top:9.5px" width="8" height="8" viewBox="0 0 8 8"><g stroke="#444" stroke-width="0.9" fill="none"><rect x="0.5" y="0.5" width="7" height="7"/><path d="M0.5 2.8h7M0.5 5.2h7M2.8 0.5v7M5.2 0.5v7"/></g></svg>
<div class="tb" style="left:1013.8px">Stapel</div>
<svg class="abs" style="left:1058.5px;top:10px" width="9" height="8" viewBox="0 0 9 8"><g stroke="#444" stroke-width="1" fill="none"><rect x="0.5" y="0.5" width="8" height="5"/><path d="M2.5 5.5v2.5M6.5 5.5v2.5M3 3.5h3M5 2v3"/></g></svg>
<div id="rtabs"></div>
<div class="abs" style="left:561px;top:30px;width:60.5px;height:25.6px;background:#cfcfcf;border-radius:3px"></div>
<div class="abs" style="left:570.3px;top:36px;font-size:10.5px;line-height:14px;letter-spacing:-0.4px;color:#222">Allgemein</div>
<!-- form -->
<div class="abs" style="left:565px;top:68px;width:43px;height:37.5px;background:#dadada"></div>
<div class="abs lb" style="left:569px;top:72px;line-height:14px;color:#333">ObjektI<br>D</div>
<div class="lb" style="left:612.8px;top:71px">Wahl</div>
<div class="abs" style="left:613.4px;top:83px;width:50.3px;height:14.2px;border:1px solid #666;background:#fff"></div>
<div class="abs" style="left:616px;top:84px;font-size:10px;line-height:13px;color:#111">1</div>
<svg class="abs" style="left:655.5px;top:88px" width="6" height="4" viewBox="0 0 6 4"><path d="M0.5 0.5l2.5 2.5 2.5-2.5" stroke="#555" stroke-width="0.9" fill="none"/></svg>
<div class="lb" style="left:686.7px;top:70px">Status</div>
<div class="abs" style="left:687px;top:82.2px;width:161px;height:25.6px;background:#fff;border-radius:3px"></div>
<div class="abs" style="left:690.6px;top:88px;font-size:10.5px;line-height:14px;letter-spacing:-0.25px;color:#333">verkäuflich</div>
<svg class="abs" style="left:805.5px;top:91.5px" width="7" height="7" viewBox="0 0 7 7"><path d="M0.5 0.5l6 6M6.5 0.5l-6 6" stroke="#c8c8c8" stroke-width="1.1"/></svg>
<div class="abs" style="left:822px;top:87.5px;width:1px;height:15px;background:#d8d8d8"></div>
<svg class="abs" style="left:831px;top:92.5px" width="9" height="5" viewBox="0 0 9 5"><path d="M0.5 0.5l4 4 4-4" stroke="#c8c8c8" stroke-width="1.1" fill="none"/></svg>
<div class="lb" style="left:566.7px;top:112.5px">Titel</div>
<div class="abs inp" style="left:566px;top:125.6px;width:282px;height:21.4px"></div>
<div class="abs" style="left:568.9px;top:126.5px;font-size:10px;line-height:13px;letter-spacing:-0.15px;color:#111">BWV 73.2</div>
<div class="lb" style="left:566.7px;top:152.5px;letter-spacing:-0.25px">Beschreibung</div>
<div class="abs inp" style="left:566px;top:165px;width:282px;height:95.6px"></div>
<div class="abs" style="left:568.9px;top:166.5px;font-size:10px;line-height:13px;color:#111">2. Arie, Tenor</div>
<div class="lb" style="left:566.7px;top:266px;letter-spacing:-0.2px">Schlagworte</div>
<div class="abs" style="left:566px;top:279.2px;width:282px;height:70.8px;background:#fff;border-radius:3px"></div>
<div class="abs" style="left:570.3px;top:305.3px;width:49.4px;height:18px;background:#e6e6e6;border-radius:2px"></div>
<div class="abs" style="left:575px;top:308.5px;font-size:10px;line-height:12px;color:#333">Musik</div>
<svg class="abs" style="left:608px;top:311.5px" width="6" height="6" viewBox="0 0 6 6"><path d="M0.5 0.5l5 5M5.5 0.5l-5 5" stroke="#222" stroke-width="1.4"/></svg>
<svg class="abs" style="left:831px;top:312px" width="9" height="5" viewBox="0 0 9 5"><path d="M0.5 0.5l4 4 4-4" stroke="#c8c8c8" stroke-width="1.1" fill="none"/></svg>
<div class="lb" style="left:566.7px;top:355.5px">Material</div>
<div class="abs" style="left:566px;top:367.8px;width:282px;height:50.8px;background:#fff;border-radius:3px"></div>
<div class="abs" style="left:570.3px;top:383.9px;width:100.2px;height:18.6px;background:#e6e6e6;border-radius:2px"></div>
<div class="abs" style="left:575px;top:388px;font-size:10px;line-height:12px;color:#333">Öl auf Baumwolle</div>
<svg class="abs" style="left:658.5px;top:390.5px" width="6" height="6" viewBox="0 0 6 6"><path d="M0.5 0.5l5 5M5.5 0.5l-5 5" stroke="#222" stroke-width="1.4"/></svg>
<svg class="abs" style="left:831px;top:391px" width="9" height="5" viewBox="0 0 9 5"><path d="M0.5 0.5l4 4 4-4" stroke="#c8c8c8" stroke-width="1.1" fill="none"/></svg>
<div class="lb" style="left:566.7px;top:424.5px">Datierung</div>
<div class="abs" style="left:566px;top:436.7px;width:121px;height:14.4px;background:#fff"></div>
<div class="abs" style="left:687.8px;top:436.7px;width:79.2px;height:14.4px;background:#fff"></div>
<div class="abs" style="left:768px;top:436.7px;width:80px;height:14.4px;background:#fff"></div>
<div class="abs" style="left:569px;top:438.5px;font-size:10px;line-height:13px;color:#111">2014</div>
<div class="abs" style="left:690.5px;top:438.5px;font-size:10px;line-height:13px;color:#111">03</div>
<div class="abs" style="left:771px;top:438.5px;font-size:10px;line-height:13px;color:#111">14</div>
<div class="abs" style="left:567px;top:451.5px;font-size:7.5px;line-height:10px;letter-spacing:0.1px;color:#444">Fr. 14. März 2014, vor 11 Jahren</div>
<div class="lb" style="left:566.7px;top:464.5px">Höhe</div>
<div class="lb" style="left:710.5px;top:464.5px">Breite</div>
<div class="abs inp" style="left:566px;top:476.1px;width:138.2px;height:21.1px"></div>
<div class="abs inp" style="left:710.5px;top:476.1px;width:137.5px;height:21.1px"></div>
<div class="abs" style="left:568.9px;top:477.5px;font-size:10px;line-height:13px;color:#111">80</div>
<div class="abs" style="left:713px;top:477.5px;font-size:10px;line-height:13px;color:#111">80</div>
<div class="pm" style="left:682.8px">-</div><div class="pm" style="left:693px">+</div>
<div class="pm" style="left:826.5px">-</div><div class="pm" style="left:836.8px">+</div>
<div class="lb" style="left:570.6px;top:513px">Notizen</div>
<div class="abs inp" style="left:570px;top:525.5px;width:273px;height:238.4px"></div>
<svg class="abs" style="left:841.0px;top:140.0px" width="6" height="6" viewBox="0 0 6 6"><path d="M5.5 0.8L0.8 5.5M5.5 3.3L3.3 5.5" stroke="#444" stroke-width="0.9"/></svg>
<svg class="abs" style="left:841.0px;top:253.6px" width="6" height="6" viewBox="0 0 6 6"><path d="M5.5 0.8L0.8 5.5M5.5 3.3L3.3 5.5" stroke="#444" stroke-width="0.9"/></svg>
<svg class="abs" style="left:697.2px;top:490.2px" width="6" height="6" viewBox="0 0 6 6"><path d="M5.5 0.8L0.8 5.5M5.5 3.3L3.3 5.5" stroke="#444" stroke-width="0.9"/></svg>
<svg class="abs" style="left:841.0px;top:490.2px" width="6" height="6" viewBox="0 0 6 6"><path d="M5.5 0.8L0.8 5.5M5.5 3.3L3.3 5.5" stroke="#444" stroke-width="0.9"/></svg>
<svg class="abs" style="left:836.0px;top:756.9px" width="6" height="6" viewBox="0 0 6 6"><path d="M5.5 0.8L0.8 5.5M5.5 3.3L3.3 5.5" stroke="#444" stroke-width="0.9"/></svg>
<!-- image panel -->
<div class="lb" style="left:856.8px;top:69px">Titelbild</div>
<div class="abs checker" style="left:857px;top:82px;width:218px;height:324px"></div>
<div class="abs" style="left:978px;top:82px;width:97px;height:15px;background:#000"></div>
<svg class="abs" style="left:857px;top:135px" width="218" height="218" viewBox="0 0 218 218" preserveAspectRatio="none">
<defs><linearGradient id="gtop" x1="0" y1="0" x2="0" y2="1"><stop offset="0" stop-color="#2d6cd2"/><stop offset="1" stop-color="#3278d8"/></linearGradient></defs><rect width="218" height="218" fill="#2f6cd0"/>
<rect y="0" width="218" height="38" fill="url(#gtop)"/>
<rect y="38" width="218" height="4" fill="#45b4ea"/>
<rect y="42" width="218" height="4" fill="#3a8ee0"/>
<rect y="46" width="54" height="10" fill="#2a5cc6"/>
<rect x="54" y="46" width="56" height="9" fill="#3cb2e2"/>
<rect x="110" y="46" width="5" height="9" fill="#2a62c8"/>
<rect x="115" y="46" width="60" height="9" fill="#3cb2e2"/>
<rect x="175" y="46" width="43" height="10" fill="#2a5cc6"/>
<rect y="56" width="218" height="8" fill="#2e56b0"/>
<rect x="0.0" y="58.2" width="4.4" height="1.2" fill="#22306e"/><rect x="4.7" y="59.1" width="2.0" height="2.4" fill="#303c78"/><rect x="7.7" y="59.0" width="1.6" height="1.5" fill="#1c2866"/><rect x="10.8" y="58.7" width="4.7" height="2.3" fill="#1a2460"/><rect x="17.0" y="60.0" width="5.1" height="1.2" fill="#1a2460"/><rect x="23.0" y="58.4" width="2.2" height="2.7" fill="#1c2866"/><rect x="26.1" y="58.1" width="3.1" height="1.8" fill="#1c2866"/><rect x="31.1" y="58.5" width="3.9" height="2.8" fill="#303c78"/><rect x="35.7" y="58.5" width="4.3" height="2.6" fill="#22306e"/><rect x="41.8" y="58.2" width="1.7" height="1.6" fill="#1c2866"/><rect x="45.6" y="58.8" width="5.4" height="1.8" fill="#2a3a80"/><rect x="51.4" y="59.7" width="3.1" height="2.3" fill="#1c2866"/><rect x="56.1" y="57.8" width="2.3" height="2.4" fill="#1a2460"/><rect x="59.0" y="58.0" width="5.7" height="2.3" fill="#2a3a80"/><rect x="66.8" y="57.3" width="5.0" height="1.6" fill="#2a3a80"/><rect x="72.8" y="59.2" width="1.8" height="2.7" fill="#2a3a80"/><rect x="75.1" y="59.4" width="3.7" height="2.6" fill="#22306e"/><rect x="79.5" y="58.1" width="2.6" height="2.1" fill="#303c78"/><rect x="83.2" y="60.7" width="4.1" height="1.8" fill="#22306e"/><rect x="88.6" y="57.6" width="1.9" height="1.3" fill="#22306e"/><rect x="92.5" y="58.5" width="3.4" height="1.3" fill="#1a2460"/><rect x="97.2" y="57.2" width="5.9" height="2.6" fill="#1c2866"/><rect x="104.8" y="59.4" width="3.9" height="1.6" fill="#1c2866"/><rect x="109.4" y="59.7" width="2.2" height="1.2" fill="#2a3a80"/><rect x="114.1" y="57.6" width="4.9" height="2.0" fill="#2a3a80"/><rect x="121.1" y="58.5" width="3.8" height="1.5" fill="#22306e"/><rect x="126.2" y="57.2" width="5.0" height="2.0" fill="#2a3a80"/><rect x="132.5" y="60.6" width="2.0" height="1.8" fill="#2a3a80"/><rect x="135.1" y="57.5" width="2.6" height="2.1" fill="#1a2460"/><rect x="139.7" y="57.6" width="5.9" height="2.1" fill="#1a2460"/><rect x="148.0" y="59.3" width="2.2" height="2.0" fill="#22306e"/><rect x="152.5" y="59.7" width="4.9" height="2.3" fill="#1a2460"/><rect x="159.9" y="59.0" width="4.4" height="1.9" fill="#1c2866"/><rect x="165.0" y="59.1" width="1.8" height="1.2" fill="#303c78"/><rect x="167.3" y="58.0" width="1.8" height="2.2" fill="#1c2866"/><rect x="171.3" y="59.5" width="1.8" height="1.6" fill="#22306e"/><rect x="174.4" y="59.2" width="4.8" height="2.6" fill="#22306e"/><rect x="181.1" y="57.5" width="5.1" height="1.5" fill="#1a2460"/><rect x="187.2" y="57.4" width="3.3" height="2.6" fill="#1c2866"/><rect x="190.7" y="57.6" width="4.8" height="2.5" fill="#22306e"/><rect x="195.9" y="58.2" width="3.5" height="1.9" fill="#22306e"/><rect x="201.6" y="60.2" width="1.8" height="2.5" fill="#1c2866"/><rect x="203.6" y="60.6" width="6.0" height="2.5" fill="#22306e"/><rect x="210.0" y="58.6" width="3.7" height="1.5" fill="#1c2866"/><rect x="214.1" y="60.4" width="1.5" height="1.8" fill="#1a2460"/><rect x="216.3" y="59.9" width="4.6" height="2.4" fill="#1a2460"/>
<rect y="64" width="218" height="5" fill="#2a66d0"/>
<rect y="69" width="218" height="6" fill="#42aaea"/>
<rect y="75" width="218" height="8" fill="#3ab4d8"/>
<rect y="83" width="218" height="3" fill="#2a62cc"/>
<rect y="86" width="218" height="7" fill="#2e56b0"/>
<rect x="0.0" y="89.2" width="2.8" height="2.7" fill="#303c78"/><rect x="3.0" y="88.9" width="2.9" height="1.3" fill="#303c78"/><rect x="6.3" y="87.9" width="5.8" height="1.3" fill="#303c78"/><rect x="12.3" y="90.5" width="5.4" height="1.8" fill="#303c78"/><rect x="18.3" y="88.7" width="4.2" height="2.2" fill="#303c78"/><rect x="23.9" y="89.5" width="2.9" height="1.6" fill="#2a3a80"/><rect x="27.4" y="88.2" width="3.3" height="2.3" fill="#2a3a80"/><rect x="33.0" y="89.4" width="5.7" height="1.2" fill="#303c78"/><rect x="41.2" y="88.1" width="1.8" height="1.5" fill="#2a3a80"/><rect x="45.2" y="87.8" width="5.5" height="1.8" fill="#303c78"/><rect x="52.4" y="89.5" width="4.3" height="2.8" fill="#1c2866"/><rect x="58.4" y="87.6" width="4.0" height="2.7" fill="#22306e"/><rect x="63.0" y="87.7" width="5.5" height="2.4" fill="#2a3a80"/><rect x="70.0" y="89.4" width="4.7" height="1.5" fill="#2a3a80"/><rect x="76.0" y="87.4" width="2.6" height="2.7" fill="#1a2460"/><rect x="80.7" y="87.7" width="1.7" height="1.7" fill="#2a3a80"/><rect x="82.8" y="89.2" width="3.5" height="2.3" fill="#1c2866"/><rect x="86.5" y="89.1" width="5.5" height="2.6" fill="#2a3a80"/><rect x="93.4" y="88.3" width="2.2" height="1.4" fill="#1c2866"/><rect x="97.9" y="87.6" width="2.4" height="1.6" fill="#303c78"/><rect x="102.5" y="87.7" width="3.3" height="2.2" fill="#22306e"/><rect x="108.0" y="90.3" width="5.9" height="2.5" fill="#1c2866"/><rect x="114.3" y="88.6" width="5.7" height="2.5" fill="#22306e"/><rect x="120.7" y="90.3" width="5.0" height="1.4" fill="#1a2460"/><rect x="126.3" y="88.3" width="5.2" height="1.9" fill="#22306e"/><rect x="132.0" y="88.2" width="4.5" height="1.8" fill="#1c2866"/><rect x="138.9" y="88.6" width="2.8" height="2.2" fill="#303c78"/><rect x="142.5" y="88.1" width="1.6" height="2.6" fill="#303c78"/><rect x="146.5" y="88.7" width="2.7" height="1.4" fill="#2a3a80"/><rect x="150.3" y="90.3" width="5.9" height="1.4" fill="#22306e"/><rect x="156.9" y="90.4" width="4.7" height="1.2" fill="#303c78"/><rect x="163.3" y="87.9" width="5.7" height="2.4" fill="#1a2460"/><rect x="169.2" y="88.3" width="4.5" height="1.7" fill="#1c2866"/><rect x="175.5" y="88.6" width="2.9" height="1.7" fill="#1a2460"/><rect x="180.0" y="89.5" width="4.0" height="1.5" fill="#1a2460"/><rect x="185.7" y="88.3" width="5.6" height="2.2" fill="#303c78"/><rect x="193.4" y="90.0" width="2.9" height="1.5" fill="#303c78"/><rect x="197.9" y="87.9" width="3.6" height="1.9" fill="#1a2460"/><rect x="203.5" y="89.5" width="5.8" height="2.4" fill="#2a3a80"/><rect x="210.6" y="90.1" width="4.3" height="1.7" fill="#22306e"/><rect x="216.6" y="87.3" width="2.5" height="1.5" fill="#22306e"/>
<rect y="93" width="218" height="9" fill="#3aa6e4"/>
<rect x="92" y="95" width="126" height="6" fill="#3a8ec8"/>
<rect y="102" width="92" height="8" fill="#2a5cc6"/>
<rect x="92" y="102" width="126" height="8" fill="#3ab8e0"/>
<rect y="110" width="218" height="6" fill="#2e56b0"/>
<rect x="0.0" y="112.8" width="4.3" height="2.4" fill="#303c78"/><rect x="4.7" y="112.1" width="4.6" height="2.0" fill="#1c2866"/><rect x="11.6" y="113.9" width="5.4" height="2.6" fill="#22306e"/><rect x="17.4" y="111.4" width="5.8" height="2.0" fill="#22306e"/><rect x="25.5" y="112.8" width="2.0" height="1.4" fill="#303c78"/><rect x="30.0" y="114.3" width="4.2" height="2.7" fill="#303c78"/><rect x="36.3" y="114.4" width="5.5" height="1.9" fill="#1a2460"/><rect x="44.0" y="112.1" width="4.8" height="2.0" fill="#22306e"/><rect x="51.0" y="112.9" width="2.7" height="2.4" fill="#22306e"/><rect x="54.4" y="112.2" width="1.8" height="1.7" fill="#2a3a80"/><rect x="58.5" y="112.5" width="1.9" height="1.4" fill="#22306e"/><rect x="62.1" y="113.1" width="1.8" height="1.9" fill="#1a2460"/><rect x="64.0" y="113.9" width="5.2" height="1.8" fill="#1c2866"/><rect x="71.4" y="111.2" width="4.9" height="1.8" fill="#2a3a80"/><rect x="77.1" y="114.1" width="3.3" height="2.6" fill="#303c78"/><rect x="82.2" y="112.0" width="4.0" height="2.2" fill="#22306e"/><rect x="86.9" y="113.5" width="3.7" height="1.8" fill="#1a2460"/><rect x="92.4" y="114.6" width="5.3" height="2.7" fill="#303c78"/><rect x="97.7" y="111.3" width="3.3" height="2.1" fill="#1a2460"/><rect x="101.3" y="112.5" width="3.6" height="1.3" fill="#22306e"/><rect x="106.1" y="112.2" width="3.0" height="2.6" fill="#1a2460"/><rect x="109.7" y="113.1" width="1.9" height="1.2" fill="#2a3a80"/><rect x="112.1" y="111.3" width="1.8" height="2.7" fill="#1c2866"/><rect x="116.3" y="111.7" width="2.4" height="1.2" fill="#22306e"/><rect x="119.9" y="112.8" width="2.0" height="2.7" fill="#2a3a80"/><rect x="123.8" y="113.8" width="2.3" height="2.2" fill="#1c2866"/><rect x="128.0" y="113.2" width="2.2" height="1.7" fill="#2a3a80"/><rect x="131.7" y="114.5" width="5.6" height="1.8" fill="#22306e"/><rect x="137.5" y="111.6" width="4.6" height="2.2" fill="#2a3a80"/><rect x="144.2" y="114.6" width="4.2" height="1.4" fill="#1c2866"/><rect x="149.3" y="113.0" width="3.4" height="1.8" fill="#2a3a80"/><rect x="152.8" y="112.7" width="3.4" height="2.0" fill="#2a3a80"/><rect x="157.7" y="112.7" width="5.2" height="2.3" fill="#303c78"/><rect x="165.4" y="113.1" width="2.7" height="2.5" fill="#1a2460"/><rect x="169.2" y="112.3" width="5.2" height="2.1" fill="#22306e"/><rect x="176.5" y="112.1" width="1.9" height="2.6" fill="#1a2460"/><rect x="179.9" y="112.9" width="4.5" height="1.7" fill="#2a3a80"/><rect x="184.8" y="112.4" width="2.5" height="2.5" fill="#303c78"/><rect x="189.0" y="114.5" width="2.7" height="1.2" fill="#1c2866"/><rect x="192.4" y="112.0" width="3.3" height="2.1" fill="#1a2460"/><rect x="197.3" y="111.5" width="3.7" height="2.5" fill="#22306e"/><rect x="202.0" y="112.5" width="2.6" height="2.3" fill="#303c78"/><rect x="206.0" y="112.4" width="3.4" height="2.4" fill="#1a2460"/><rect x="210.1" y="111.9" width="2.6" height="1.4" fill="#1c2866"/><rect x="214.5" y="111.9" width="5.8" height="2.3" fill="#1a2460"/>
<rect y="116" width="218" height="4" fill="#2a70d4"/>
<rect y="120" width="85" height="6" fill="#3a8cc8"/>
<rect x="85" y="120" width="133" height="6" fill="#3a90e2"/>
<rect y="126" width="86" height="9" fill="#3ab4e0"/>
<rect x="86" y="126" width="81" height="9" fill="#2a5ccc"/>
<rect x="167" y="126" width="51" height="9" fill="#3ab4e0"/>
<rect y="135" width="218" height="6" fill="#2e56b0"/>
<rect x="0.0" y="137.8" width="4.2" height="2.4" fill="#1c2866"/><rect x="6.2" y="136.8" width="2.8" height="1.8" fill="#303c78"/><rect x="9.4" y="136.7" width="1.7" height="1.3" fill="#22306e"/><rect x="12.7" y="135.7" width="4.9" height="1.4" fill="#2a3a80"/><rect x="18.7" y="135.9" width="3.5" height="1.5" fill="#1a2460"/><rect x="22.5" y="137.7" width="1.8" height="2.0" fill="#1c2866"/><rect x="24.7" y="136.0" width="5.2" height="2.7" fill="#22306e"/><rect x="30.1" y="138.5" width="4.9" height="2.2" fill="#22306e"/><rect x="37.0" y="136.7" width="3.2" height="2.7" fill="#303c78"/><rect x="42.7" y="137.8" width="2.9" height="2.2" fill="#1c2866"/><rect x="47.9" y="138.0" width="2.4" height="1.5" fill="#22306e"/><rect x="51.0" y="137.1" width="4.0" height="1.5" fill="#303c78"/><rect x="56.1" y="136.7" width="1.6" height="1.7" fill="#1a2460"/><rect x="58.0" y="138.5" width="2.6" height="1.6" fill="#303c78"/><rect x="62.2" y="137.6" width="5.7" height="1.9" fill="#22306e"/><rect x="70.1" y="136.3" width="5.2" height="1.3" fill="#2a3a80"/><rect x="76.8" y="137.2" width="5.2" height="2.7" fill="#1a2460"/><rect x="83.8" y="137.5" width="4.6" height="2.7" fill="#1a2460"/><rect x="89.5" y="138.3" width="4.2" height="2.6" fill="#303c78"/><rect x="94.3" y="138.6" width="1.9" height="2.7" fill="#303c78"/><rect x="97.7" y="138.6" width="1.6" height="2.4" fill="#303c78"/><rect x="99.4" y="138.0" width="4.9" height="2.0" fill="#2a3a80"/><rect x="104.8" y="137.4" width="4.1" height="2.2" fill="#1c2866"/><rect x="110.1" y="136.1" width="3.3" height="1.7" fill="#22306e"/><rect x="114.2" y="139.0" width="4.6" height="1.7" fill="#303c78"/><rect x="118.9" y="136.1" width="1.9" height="1.6" fill="#1a2460"/><rect x="123.0" y="138.7" width="5.2" height="1.2" fill="#1a2460"/><rect x="129.3" y="138.3" width="2.3" height="1.8" fill="#1a2460"/><rect x="133.5" y="138.9" width="2.4" height="2.1" fill="#1a2460"/><rect x="138.1" y="137.9" width="3.7" height="1.2" fill="#22306e"/><rect x="143.6" y="137.1" width="2.9" height="1.2" fill="#22306e"/><rect x="148.9" y="136.1" width="5.6" height="1.9" fill="#22306e"/><rect x="155.8" y="136.7" width="4.7" height="2.0" fill="#1a2460"/><rect x="163.0" y="137.0" width="2.6" height="2.1" fill="#303c78"/><rect x="166.8" y="136.7" width="5.5" height="2.6" fill="#1a2460"/><rect x="173.2" y="135.7" width="5.0" height="1.6" fill="#2a3a80"/><rect x="180.3" y="138.7" width="4.1" height="2.3" fill="#1a2460"/><rect x="185.7" y="137.6" width="3.1" height="2.1" fill="#1a2460"/><rect x="191.1" y="136.5" width="5.4" height="2.8" fill="#1a2460"/><rect x="197.1" y="138.3" width="5.0" height="1.3" fill="#1a2460"/><rect x="203.1" y="139.1" width="4.5" height="2.5" fill="#1a2460"/><rect x="210.0" y="136.9" width="2.1" height="2.7" fill="#1c2866"/><rect x="214.2" y="137.3" width="3.5" height="2.0" fill="#22306e"/>
<rect y="141" width="218" height="7" fill="#3290e0"/>
<rect y="148" width="36" height="10" fill="#2a5cc8"/>
<rect x="36" y="148" width="39" height="10" fill="#3ab4e0"/>
<rect x="75" y="148" width="37" height="10" fill="#2a5cc8"/>
<rect x="112" y="148" width="106" height="10" fill="#3ab4e0"/>
<rect y="158" width="218" height="6" fill="#2e56b0"/>
<rect x="0.0" y="160.3" width="4.4" height="1.4" fill="#2a3a80"/><rect x="5.3" y="161.7" width="4.6" height="2.2" fill="#303c78"/><rect x="10.9" y="161.4" width="2.9" height="2.3" fill="#303c78"/><rect x="13.9" y="161.9" width="1.8" height="2.2" fill="#22306e"/><rect x="17.5" y="160.9" width="3.5" height="1.4" fill="#1c2866"/><rect x="22.1" y="158.9" width="4.6" height="2.6" fill="#1c2866"/><rect x="27.5" y="160.6" width="3.2" height="1.4" fill="#303c78"/><rect x="32.4" y="160.8" width="2.3" height="1.5" fill="#1a2460"/><rect x="36.2" y="159.2" width="2.6" height="2.7" fill="#1a2460"/><rect x="40.4" y="161.8" width="3.6" height="2.3" fill="#1a2460"/><rect x="46.2" y="160.2" width="4.5" height="1.5" fill="#2a3a80"/><rect x="53.2" y="161.1" width="2.8" height="2.7" fill="#1a2460"/><rect x="58.2" y="160.4" width="2.4" height="1.8" fill="#22306e"/><rect x="61.5" y="161.1" width="3.1" height="1.7" fill="#1c2866"/><rect x="67.1" y="160.7" width="4.5" height="1.6" fill="#1c2866"/><rect x="73.8" y="161.9" width="4.9" height="2.5" fill="#22306e"/><rect x="80.2" y="160.9" width="3.1" height="2.2" fill="#22306e"/><rect x="84.9" y="159.8" width="5.6" height="2.2" fill="#1a2460"/><rect x="90.5" y="161.9" width="3.1" height="1.4" fill="#2a3a80"/><rect x="95.5" y="160.6" width="2.3" height="1.4" fill="#2a3a80"/><rect x="99.1" y="159.6" width="5.6" height="2.5" fill="#1a2460"/><rect x="107.2" y="161.5" width="2.8" height="2.6" fill="#1a2460"/><rect x="112.4" y="161.7" width="2.1" height="2.7" fill="#1a2460"/><rect x="117.0" y="161.5" width="5.1" height="1.8" fill="#1c2866"/><rect x="122.7" y="161.3" width="2.1" height="1.8" fill="#2a3a80"/><rect x="126.3" y="159.1" width="5.2" height="2.7" fill="#22306e"/><rect x="132.6" y="159.8" width="4.3" height="2.7" fill="#303c78"/><rect x="137.5" y="161.9" width="1.8" height="2.5" fill="#2a3a80"/><rect x="140.9" y="158.8" width="2.0" height="1.3" fill="#1a2460"/><rect x="143.2" y="160.1" width="2.6" height="2.1" fill="#2a3a80"/><rect x="147.4" y="160.2" width="4.8" height="2.7" fill="#22306e"/><rect x="154.5" y="160.9" width="4.4" height="2.5" fill="#2a3a80"/><rect x="159.0" y="162.0" width="3.2" height="1.9" fill="#2a3a80"/><rect x="162.4" y="162.1" width="4.6" height="2.1" fill="#2a3a80"/><rect x="167.2" y="162.0" width="2.7" height="2.7" fill="#1a2460"/><rect x="170.2" y="162.1" width="2.5" height="2.2" fill="#1c2866"/><rect x="174.6" y="160.7" width="2.6" height="1.4" fill="#1c2866"/><rect x="179.2" y="161.5" width="4.0" height="2.1" fill="#22306e"/><rect x="184.1" y="158.7" width="2.2" height="2.6" fill="#22306e"/><rect x="188.7" y="159.1" width="3.9" height="2.5" fill="#1c2866"/><rect x="193.0" y="160.8" width="3.1" height="2.5" fill="#1c2866"/><rect x="196.5" y="160.5" width="1.7" height="2.4" fill="#1c2866"/><rect x="199.4" y="159.1" width="5.0" height="2.0" fill="#303c78"/><rect x="205.0" y="161.9" width="4.3" height="2.4" fill="#303c78"/><rect x="210.0" y="162.2" width="4.4" height="1.2" fill="#1a2460"/><rect x="215.5" y="160.3" width="2.0" height="2.3" fill="#1c2866"/>
<rect y="164" width="218" height="7" fill="#3294e2"/>
<rect y="171" width="143" height="11" fill="#3ab4e0"/>
<rect x="143" y="171" width="75" height="11" fill="#2a5cc8"/>
<rect y="182" width="218" height="6" fill="#2e56b0"/>
<rect x="0.0" y="184.9" width="2.2" height="1.4" fill="#303c78"/><rect x="3.5" y="184.6" width="3.0" height="2.8" fill="#1a2460"/><rect x="7.8" y="183.1" width="3.4" height="2.5" fill="#303c78"/><rect x="13.0" y="183.5" width="2.5" height="1.9" fill="#2a3a80"/><rect x="17.5" y="183.8" width="3.3" height="2.4" fill="#2a3a80"/><rect x="22.5" y="185.9" width="3.2" height="1.4" fill="#1c2866"/><rect x="25.9" y="185.3" width="1.9" height="1.9" fill="#2a3a80"/><rect x="29.8" y="184.7" width="4.0" height="2.1" fill="#2a3a80"/><rect x="35.5" y="186.0" width="3.3" height="2.6" fill="#1a2460"/><rect x="41.0" y="184.8" width="4.7" height="2.7" fill="#2a3a80"/><rect x="46.0" y="184.4" width="3.8" height="1.4" fill="#1c2866"/><rect x="50.7" y="183.7" width="4.0" height="1.4" fill="#22306e"/><rect x="56.7" y="185.6" width="5.3" height="2.8" fill="#303c78"/><rect x="63.7" y="185.0" width="4.0" height="2.2" fill="#2a3a80"/><rect x="67.8" y="185.9" width="2.7" height="2.4" fill="#2a3a80"/><rect x="70.5" y="184.1" width="5.4" height="2.1" fill="#22306e"/><rect x="77.8" y="184.6" width="5.9" height="1.3" fill="#1a2460"/><rect x="84.7" y="185.2" width="3.0" height="1.8" fill="#303c78"/><rect x="89.2" y="185.3" width="5.5" height="1.4" fill="#1c2866"/><rect x="96.4" y="184.4" width="2.7" height="2.3" fill="#1a2460"/><rect x="100.2" y="183.9" width="2.5" height="2.0" fill="#1c2866"/><rect x="103.3" y="185.0" width="4.6" height="2.0" fill="#1c2866"/><rect x="108.4" y="183.4" width="5.9" height="1.3" fill="#22306e"/><rect x="116.3" y="183.1" width="4.9" height="1.7" fill="#1a2460"/><rect x="123.1" y="185.2" width="2.3" height="1.8" fill="#303c78"/><rect x="126.8" y="184.1" width="4.5" height="1.8" fill="#1c2866"/><rect x="132.4" y="183.8" width="3.6" height="1.3" fill="#1a2460"/><rect x="137.4" y="183.1" width="4.7" height="1.9" fill="#1c2866"/><rect x="144.5" y="184.3" width="2.3" height="2.7" fill="#2a3a80"/><rect x="147.0" y="184.8" width="5.3" height="1.6" fill="#303c78"/><rect x="152.5" y="183.5" width="5.4" height="2.4" fill="#22306e"/><rect x="158.1" y="183.4" width="4.3" height="2.0" fill="#2a3a80"/><rect x="163.3" y="183.2" width="5.8" height="2.2" fill="#1c2866"/><rect x="169.5" y="185.4" width="2.4" height="2.2" fill="#1c2866"/><rect x="172.3" y="185.3" width="5.0" height="2.0" fill="#303c78"/><rect x="178.4" y="184.9" width="5.7" height="2.1" fill="#303c78"/><rect x="184.9" y="184.2" width="5.9" height="1.7" fill="#1a2460"/><rect x="191.9" y="182.9" width="2.9" height="1.6" fill="#303c78"/><rect x="194.9" y="184.0" width="3.6" height="1.3" fill="#2a3a80"/><rect x="198.7" y="184.9" width="5.4" height="2.6" fill="#303c78"/><rect x="205.0" y="185.3" width="4.1" height="2.7" fill="#1c2866"/><rect x="210.3" y="183.8" width="5.1" height="2.2" fill="#1a2460"/><rect x="216.7" y="185.5" width="5.8" height="1.9" fill="#2a3a80"/>
<rect y="188" width="218" height="12" fill="#2f70d2"/>
<rect y="200" width="218" height="18" fill="#2a5cc0"/>
<rect x="131" y="208" width="27" height="2" fill="#24306a"/>
</svg>
<div class="abs" style="left:857px;top:406px;width:109px;height:12px;background:#bdbdbd"></div>
<div class="abs" style="left:966.5px;top:406px;width:108.5px;height:12px;background:#bdbdbd"></div>
<div class="abs" style="left:854.8px;top:432.8px;width:222.2px;height:333.2px;background:#dcdcdc"></div>
<div id="rfoot"></div>

<!-- image toolbar icons -->
<svg class="abs" style="left:981px;top:85px" width="79" height="11" viewBox="0 0 79 11">
<g stroke="#fff" stroke-width="1.7" fill="none">
<path d="M2.2 4.2A4 4 0 1 1 3.2 8.8"/>
<path d="M24.8 4.2A4 4 0 1 0 23.8 8.8"/>
<circle cx="37.8" cy="4.5" r="3.4"/><path d="M40.2 7l3 3"/>
<circle cx="54.3" cy="4.5" r="3.4"/><path d="M56.7 7l3 3"/>
</g>
<path d="M36 4.5h3.6M37.8 2.7v3.6M52.5 4.5h3.6" stroke="#fff" stroke-width="1.3"/>
<path d="M0 1.2v4.6h4.6z" fill="#fff"/>
<path d="M27 1.2v4.6h-4.6z" fill="#fff"/>
<path d="M66.5 5.6l6-5.2 6 5.2h-1.6v4.6h-3v-2.8h-2.8v2.8h-3V5.6z" fill="#fff"/>
</svg>
<div class="abs" style="left:966px;top:353px;width:0.8px;height:65px;background:#d6d6d6"></div>
<svg class="abs" style="left:901px;top:372px" width="17" height="11" viewBox="0 0 17 11"><path d="M0.5 10V1.2h4.5l1.3 1.3h6.2v2H3.5z" fill="#777"/><path d="M0.5 10.5L3.3 4.8h13.2l-2.8 5.7z" fill="#777"/></svg>
<svg class="abs" style="left:1011px;top:372px" width="17" height="11" viewBox="0 0 17 11"><path d="M0.5 5.5C3 1.5 5.8 0.3 8.5 0.3S14 1.5 16.5 5.5C14 9.5 11.2 10.7 8.5 10.7S3 9.5 0.5 5.5z" fill="#777"/><circle cx="8.5" cy="5.5" r="3.6" fill="#d8d8d8"/><circle cx="8.5" cy="5.5" r="2.6" fill="#777"/><circle cx="7.6" cy="4.6" r="0.9" fill="#d8d8d8"/></svg>
<!-- thumbs panel -->
<div class="abs" style="left:859.2px;top:440px;width:90.6px;height:6px;background:#cdcdcd"></div>
<div class="abs" style="left:871.7px;top:440px;width:6.2px;height:6px;background:#222"></div>
<div class="abs" style="left:949px;top:439px;width:1px;height:8px;background:#222"></div>
<svg class="abs" style="left:952.5px;top:438px" width="11" height="10" viewBox="0 0 11 10"><path d="M4 0h3v3.8h2.3L5.5 7.6 1.7 3.8H4z" fill="#3a86d4"/><path d="M0.3 6.5h1.8v1.8h6.8V6.5h1.8V10H0.3z" fill="#3a86d4"/></svg>
<div class="abs" style="left:859px;top:460.8px;width:50.4px;height:50.1px;border-radius:2.5px;overflow:hidden"><svg width="50.4" height="50.1" viewBox="0 10 218 208" preserveAspectRatio="none" style="display:block">
<defs><linearGradient id="gtop2" x1="0" y1="0" x2="0" y2="1"><stop offset="0" stop-color="#2d6cd2"/><stop offset="1" stop-color="#3278d8"/></linearGradient></defs><rect width="218" height="218" fill="#2f6cd0"/>
<rect y="0" width="218" height="38" fill="url(#gtop2)"/>
<rect y="38" width="218" height="4" fill="#45b4ea"/>
<rect y="42" width="218" height="4" fill="#3a8ee0"/>
<rect y="46" width="54" height="10" fill="#2a5cc6"/>
<rect x="54" y="46" width="56" height="9" fill="#3cb2e2"/>
<rect x="110" y="46" width="5" height="9" fill="#2a62c8"/>
<rect x="115" y="46" width="60" height="9" fill="#3cb2e2"/>
<rect x="175" y="46" width="43" height="10" fill="#2a5cc6"/>
<rect y="56" width="218" height="8" fill="#2e56b0"/>
<rect x="0" y="58.2" width="218" height="2.2" fill="#23306e"/>
<rect y="64" width="218" height="5" fill="#2a66d0"/>
<rect y="69" width="218" height="6" fill="#42aaea"/>
<rect y="75" width="218" height="8" fill="#3ab4d8"/>
<rect y="83" width="218" height="3" fill="#2a62cc"/>
<rect y="86" width="218" height="7" fill="#2e56b0"/>
<rect x="0" y="88.2" width="218" height="2.2" fill="#23306e"/>
<rect y="93" width="218" height="9" fill="#3aa6e4"/>
<rect x="92" y="95" width="126" height="6" fill="#3a8ec8"/>
<rect y="102" width="92" height="8" fill="#2a5cc6"/>
<rect x="92" y="102" width="126" height="8" fill="#3ab8e0"/>
<rect y="110" width="218" height="6" fill="#2e56b0"/>
<rect x="0" y="112.2" width="218" height="2.2" fill="#23306e"/>
<rect y="116" width="218" height="4" fill="#2a70d4"/>
<rect y="120" width="85" height="6" fill="#3a8cc8"/>
<rect x="85" y="120" width="133" height="6" fill="#3a90e2"/>
<rect y="126" width="86" height="9" fill="#3ab4e0"/>
<rect x="86" y="126" width="81" height="9" fill="#2a5ccc"/>
<rect x="167" y="126" width="51" height="9" fill="#3ab4e0"/>
<rect y="135" width="218" height="6" fill="#2e56b0"/>
<rect x="0" y="136.7" width="218" height="2.2" fill="#23306e"/>
<rect y="141" width="218" height="7" fill="#3290e0"/>
<rect y="148" width="36" height="10" fill="#2a5cc8"/>
<rect x="36" y="148" width="39" height="10" fill="#3ab4e0"/>
<rect x="75" y="148" width="37" height="10" fill="#2a5cc8"/>
<rect x="112" y="148" width="106" height="10" fill="#3ab4e0"/>
<rect y="158" width="218" height="6" fill="#2e56b0"/>
<rect x="0" y="159.7" width="218" height="2.2" fill="#23306e"/>
<rect y="164" width="218" height="7" fill="#3294e2"/>
<rect y="171" width="143" height="11" fill="#3ab4e0"/>
<rect x="143" y="171" width="75" height="11" fill="#2a5cc8"/>
<rect y="182" width="218" height="6" fill="#2e56b0"/>
<rect x="0" y="183.7" width="218" height="2.2" fill="#23306e"/>
<rect y="188" width="218" height="12" fill="#2f70d2"/>
<rect y="200" width="218" height="18" fill="#2a5cc0"/>
<rect x="131" y="208" width="27" height="2" fill="#24306a"/>
</svg></div>
<div class="abs" style="left:914.8px;top:460.8px;width:50.4px;height:50.1px;background:#fff;border-radius:2.5px"></div>
<svg class="abs" style="left:914.8px;top:466.8px" width="50.4" height="37.8" viewBox="0 0 50 38" preserveAspectRatio="none">
<rect width="50" height="38" fill="#ececec"/>
<rect x="0" y="0" width="1.2" height="38" fill="#b06a30"/>
<rect x="1.2" y="0" width="1.5" height="38" fill="#f4f4f4"/>
<rect x="46" y="0" width="4" height="38" fill="#e4e4e4"/>
<svg x="14" y="0" width="22" height="4" viewBox="0 160 218 58" preserveAspectRatio="none">
<defs><linearGradient id="gtop3" x1="0" y1="0" x2="0" y2="1"><stop offset="0" stop-color="#2d6cd2"/><stop offset="1" stop-color="#3278d8"/></linearGradient></defs><rect width="218" height="218" fill="#2f6cd0"/>
<rect y="0" width="218" height="38" fill="url(#gtop3)"/>
<rect y="38" width="218" height="4" fill="#45b4ea"/>
<rect y="42" width="218" height="4" fill="#3a8ee0"/>
<rect y="46" width="54" height="10" fill="#2a5cc6"/>
<rect x="54" y="46" width="56" height="9" fill="#3cb2e2"/>
<rect x="110" y="46" width="5" height="9" fill="#2a62c8"/>
<rect x="115" y="46" width="60" height="9" fill="#3cb2e2"/>
<rect x="175" y="46" width="43" height="10" fill="#2a5cc6"/>
<rect y="56" width="218" height="8" fill="#2e56b0"/>
<rect x="0" y="58.2" width="218" height="2.2" fill="#23306e"/>
<rect y="64" width="218" height="5" fill="#2a66d0"/>
<rect y="69" width="218" height="6" fill="#42aaea"/>
<rect y="75" width="218" height="8" fill="#3ab4d8"/>
<rect y="83" width="218" height="3" fill="#2a62cc"/>
<rect y="86" width="218" height="7" fill="#2e56b0"/>
<rect x="0" y="88.2" width="218" height="2.2" fill="#23306e"/>
<rect y="93" width="218" height="9" fill="#3aa6e4"/>
<rect x="92" y="95" width="126" height="6" fill="#3a8ec8"/>
<rect y="102" width="92" height="8" fill="#2a5cc6"/>
<rect x="92" y="102" width="126" height="8" fill="#3ab8e0"/>
<rect y="110" width="218" height="6" fill="#2e56b0"/>
<rect x="0" y="112.2" width="218" height="2.2" fill="#23306e"/>
<rect y="116" width="218" height="4" fill="#2a70d4"/>
<rect y="120" width="85" height="6" fill="#3a8cc8"/>
<rect x="85" y="120" width="133" height="6" fill="#3a90e2"/>
<rect y="126" width="86" height="9" fill="#3ab4e0"/>
<rect x="86" y="126" width="81" height="9" fill="#2a5ccc"/>
<rect x="167" y="126" width="51" height="9" fill="#3ab4e0"/>
<rect y="135" width="218" height="6" fill="#2e56b0"/>
<rect x="0" y="136.7" width="218" height="2.2" fill="#23306e"/>
<rect y="141" width="218" height="7" fill="#3290e0"/>
<rect y="148" width="36" height="10" fill="#2a5cc8"/>
<rect x="36" y="148" width="39" height="10" fill="#3ab4e0"/>
<rect x="75" y="148" width="37" height="10" fill="#2a5cc8"/>
<rect x="112" y="148" width="106" height="10" fill="#3ab4e0"/>
<rect y="158" width="218" height="6" fill="#2e56b0"/>
<rect x="0" y="159.7" width="218" height="2.2" fill="#23306e"/>
<rect y="164" width="218" height="7" fill="#3294e2"/>
<rect y="171" width="143" height="11" fill="#3ab4e0"/>
<rect x="143" y="171" width="75" height="11" fill="#2a5cc8"/>
<rect y="182" width="218" height="6" fill="#2e56b0"/>
<rect x="0" y="183.7" width="218" height="2.2" fill="#23306e"/>
<rect y="188" width="218" height="12" fill="#2f70d2"/>
<rect y="200" width="218" height="18" fill="#2a5cc0"/>
<rect x="131" y="208" width="27" height="2" fill="#24306a"/>
</svg>
<svg x="14.5" y="7" width="21.5" height="21" viewBox="0 0 218 218" preserveAspectRatio="none">
<defs><linearGradient id="gtop4" x1="0" y1="0" x2="0" y2="1"><stop offset="0" stop-color="#2d6cd2"/><stop offset="1" stop-color="#3278d8"/></linearGradient></defs><rect width="218" height="218" fill="#2f6cd0"/>
<rect y="0" width="218" height="38" fill="url(#gtop4)"/>
<rect y="38" width="218" height="4" fill="#45b4ea"/>
<rect y="42" width="218" height="4" fill="#3a8ee0"/>
<rect y="46" width="54" height="10" fill="#2a5cc6"/>
<rect x="54" y="46" width="56" height="9" fill="#3cb2e2"/>
<rect x="110" y="46" width="5" height="9" fill="#2a62c8"/>
<rect x="115" y="46" width="60" height="9" fill="#3cb2e2"/>
<rect x="175" y="46" width="43" height="10" fill="#2a5cc6"/>
<rect y="56" width="218" height="8" fill="#2e56b0"/>
<rect x="0" y="58.2" width="218" height="2.2" fill="#23306e"/>
<rect y="64" width="218" height="5" fill="#2a66d0"/>
<rect y="69" width="218" height="6" fill="#42aaea"/>
<rect y="75" width="218" height="8" fill="#3ab4d8"/>
<rect y="83" width="218" height="3" fill="#2a62cc"/>
<rect y="86" width="218" height="7" fill="#2e56b0"/>
<rect x="0" y="88.2" width="218" height="2.2" fill="#23306e"/>
<rect y="93" width="218" height="9" fill="#3aa6e4"/>
<rect x="92" y="95" width="126" height="6" fill="#3a8ec8"/>
<rect y="102" width="92" height="8" fill="#2a5cc6"/>
<rect x="92" y="102" width="126" height="8" fill="#3ab8e0"/>
<rect y="110" width="218" height="6" fill="#2e56b0"/>
<rect x="0" y="112.2" width="218" height="2.2" fill="#23306e"/>
<rect y="116" width="218" height="4" fill="#2a70d4"/>
<rect y="120" width="85" height="6" fill="#3a8cc8"/>
<rect x="85" y="120" width="133" height="6" fill="#3a90e2"/>
<rect y="126" width="86" height="9" fill="#3ab4e0"/>
<rect x="86" y="126" width="81" height="9" fill="#2a5ccc"/>
<rect x="167" y="126" width="51" height="9" fill="#3ab4e0"/>
<rect y="135" width="218" height="6" fill="#2e56b0"/>
<rect x="0" y="136.7" width="218" height="2.2" fill="#23306e"/>
<rect y="141" width="218" height="7" fill="#3290e0"/>
<rect y="148" width="36" height="10" fill="#2a5cc8"/>
<rect x="36" y="148" width="39" height="10" fill="#3ab4e0"/>
<rect x="75" y="148" width="37" height="10" fill="#2a5cc8"/>
<rect x="112" y="148" width="106" height="10" fill="#3ab4e0"/>
<rect y="158" width="218" height="6" fill="#2e56b0"/>
<rect x="0" y="159.7" width="218" height="2.2" fill="#23306e"/>
<rect y="164" width="218" height="7" fill="#3294e2"/>
<rect y="171" width="143" height="11" fill="#3ab4e0"/>
<rect x="143" y="171" width="75" height="11" fill="#2a5cc8"/>
<rect y="182" width="218" height="6" fill="#2e56b0"/>
<rect x="0" y="183.7" width="218" height="2.2" fill="#23306e"/>
<rect y="188" width="218" height="12" fill="#2f70d2"/>
<rect y="200" width="218" height="18" fill="#2a5cc0"/>
<rect x="131" y="208" width="27" height="2" fill="#24306a"/>
</svg>
<rect x="14.5" y="28" width="21.5" height="1" fill="#d8d8d8"/>
<rect x="39" y="8" width="8.5" height="30" fill="#5a5a5a"/>
<rect x="40.5" y="9.5" width="6" height="28.5" fill="#d8d8d8"/>
<rect x="43" y="10" width="3" height="12" fill="#f0f0f0"/>
<rect x="2" y="33" width="37" height="5" fill="#b08050"/>
<rect x="7" y="31" width="8" height="3" fill="#8a8a70"/>
<rect x="17" y="32" width="5" height="2" fill="#4a7ab0"/>
</svg>
<div class="abs" style="left:970.7px;top:460.8px;width:50.3px;height:50.1px;background:#fff;border-radius:2.5px"></div>
<svg class="abs" style="left:970.7px;top:466.8px" width="50.3" height="37.8" viewBox="0 0 50 38" preserveAspectRatio="none">
<rect width="50" height="38" fill="#e6e6e6"/>
<svg x="8.6" y="0" width="37.3" height="38" viewBox="0 0 218 218" preserveAspectRatio="none">
<defs><linearGradient id="gtop5" x1="0" y1="0" x2="0" y2="1"><stop offset="0" stop-color="#2d6cd2"/><stop offset="1" stop-color="#3278d8"/></linearGradient></defs><rect width="218" height="218" fill="#2f6cd0"/>
<rect y="0" width="218" height="38" fill="url(#gtop5)"/>
<rect y="38" width="218" height="4" fill="#45b4ea"/>
<rect y="42" width="218" height="4" fill="#3a8ee0"/>
<rect y="46" width="54" height="10" fill="#2a5cc6"/>
<rect x="54" y="46" width="56" height="9" fill="#3cb2e2"/>
<rect x="110" y="46" width="5" height="9" fill="#2a62c8"/>
<rect x="115" y="46" width="60" height="9" fill="#3cb2e2"/>
<rect x="175" y="46" width="43" height="10" fill="#2a5cc6"/>
<rect y="56" width="218" height="8" fill="#2e56b0"/>
<rect x="0" y="58.2" width="218" height="2.2" fill="#23306e"/>
<rect y="64" width="218" height="5" fill="#2a66d0"/>
<rect y="69" width="218" height="6" fill="#42aaea"/>
<rect y="75" width="218" height="8" fill="#3ab4d8"/>
<rect y="83" width="218" height="3" fill="#2a62cc"/>
<rect y="86" width="218" height="7" fill="#2e56b0"/>
<rect x="0" y="88.2" width="218" height="2.2" fill="#23306e"/>
<rect y="93" width="218" height="9" fill="#3aa6e4"/>
<rect x="92" y="95" width="126" height="6" fill="#3a8ec8"/>
<rect y="102" width="92" height="8" fill="#2a5cc6"/>
<rect x="92" y="102" width="126" height="8" fill="#3ab8e0"/>
<rect y="110" width="218" height="6" fill="#2e56b0"/>
<rect x="0" y="112.2" width="218" height="2.2" fill="#23306e"/>
<rect y="116" width="218" height="4" fill="#2a70d4"/>
<rect y="120" width="85" height="6" fill="#3a8cc8"/>
<rect x="85" y="120" width="133" height="6" fill="#3a90e2"/>
<rect y="126" width="86" height="9" fill="#3ab4e0"/>
<rect x="86" y="126" width="81" height="9" fill="#2a5ccc"/>
<rect x="167" y="126" width="51" height="9" fill="#3ab4e0"/>
<rect y="135" width="218" height="6" fill="#2e56b0"/>
<rect x="0" y="136.7" width="218" height="2.2" fill="#23306e"/>
<rect y="141" width="218" height="7" fill="#3290e0"/>
<rect y="148" width="36" height="10" fill="#2a5cc8"/>
<rect x="36" y="148" width="39" height="10" fill="#3ab4e0"/>
<rect x="75" y="148" width="37" height="10" fill="#2a5cc8"/>
<rect x="112" y="148" width="106" height="10" fill="#3ab4e0"/>
<rect y="158" width="218" height="6" fill="#2e56b0"/>
<rect x="0" y="159.7" width="218" height="2.2" fill="#23306e"/>
<rect y="164" width="218" height="7" fill="#3294e2"/>
<rect y="171" width="143" height="11" fill="#3ab4e0"/>
<rect x="143" y="171" width="75" height="11" fill="#2a5cc8"/>
<rect y="182" width="218" height="6" fill="#2e56b0"/>
<rect x="0" y="183.7" width="218" height="2.2" fill="#23306e"/>
<rect y="188" width="218" height="12" fill="#2f70d2"/>
<rect y="200" width="218" height="18" fill="#2a5cc0"/>
<rect x="131" y="208" width="27" height="2" fill="#24306a"/>
</svg>
</svg>
<svg class="abs" style="left:859px;top:516px" width="50.4" height="37.8" viewBox="0 0 50 38" preserveAspectRatio="none">
<rect width="50" height="38" fill="#ececec"/>
<rect x="0" y="0" width="50" height="1" fill="#c8c0b0"/>
<rect x="0" y="3" width="8" height="35" fill="#d8a860"/>
<rect x="0" y="3" width="8" height="9" fill="#c89030"/>
<rect x="0" y="20" width="8" height="2" fill="#a86a30"/>
<rect x="2" y="25" width="6" height="5" fill="#f4f4f4"/>
<rect x="8" y="3" width="1" height="35" fill="#8a6a40"/>
<svg x="18.5" y="3" width="15.5" height="14" viewBox="0 0 218 200" preserveAspectRatio="none">
<defs><linearGradient id="gtop6" x1="0" y1="0" x2="0" y2="1"><stop offset="0" stop-color="#2d6cd2"/><stop offset="1" stop-color="#3278d8"/></linearGradient></defs><rect width="218" height="218" fill="#2f6cd0"/>
<rect y="0" width="218" height="38" fill="url(#gtop6)"/>
<rect y="38" width="218" height="4" fill="#45b4ea"/>
<rect y="42" width="218" height="4" fill="#3a8ee0"/>
<rect y="46" width="54" height="10" fill="#2a5cc6"/>
<rect x="54" y="46" width="56" height="9" fill="#3cb2e2"/>
<rect x="110" y="46" width="5" height="9" fill="#2a62c8"/>
<rect x="115" y="46" width="60" height="9" fill="#3cb2e2"/>
<rect x="175" y="46" width="43" height="10" fill="#2a5cc6"/>
<rect y="56" width="218" height="8" fill="#2e56b0"/>
<rect x="0" y="58.2" width="218" height="2.2" fill="#23306e"/>
<rect y="64" width="218" height="5" fill="#2a66d0"/>
<rect y="69" width="218" height="6" fill="#42aaea"/>
<rect y="75" width="218" height="8" fill="#3ab4d8"/>
<rect y="83" width="218" height="3" fill="#2a62cc"/>
<rect y="86" width="218" height="7" fill="#2e56b0"/>
<rect x="0" y="88.2" width="218" height="2.2" fill="#23306e"/>
<rect y="93" width="218" height="9" fill="#3aa6e4"/>
<rect x="92" y="95" width="126" height="6" fill="#3a8ec8"/>
<rect y="102" width="92" height="8" fill="#2a5cc6"/>
<rect x="92" y="102" width="126" height="8" fill="#3ab8e0"/>
<rect y="110" width="218" height="6" fill="#2e56b0"/>
<rect x="0" y="112.2" width="218" height="2.2" fill="#23306e"/>
<rect y="116" width="218" height="4" fill="#2a70d4"/>
<rect y="120" width="85" height="6" fill="#3a8cc8"/>
<rect x="85" y="120" width="133" height="6" fill="#3a90e2"/>
<rect y="126" width="86" height="9" fill="#3ab4e0"/>
<rect x="86" y="126" width="81" height="9" fill="#2a5ccc"/>
<rect x="167" y="126" width="51" height="9" fill="#3ab4e0"/>
<rect y="135" width="218" height="6" fill="#2e56b0"/>
<rect x="0" y="136.7" width="218" height="2.2" fill="#23306e"/>
<rect y="141" width="218" height="7" fill="#3290e0"/>
<rect y="148" width="36" height="10" fill="#2a5cc8"/>
<rect x="36" y="148" width="39" height="10" fill="#3ab4e0"/>
<rect x="75" y="148" width="37" height="10" fill="#2a5cc8"/>
<rect x="112" y="148" width="106" height="10" fill="#3ab4e0"/>
<rect y="158" width="218" height="6" fill="#2e56b0"/>
<rect x="0" y="159.7" width="218" height="2.2" fill="#23306e"/>
<rect y="164" width="218" height="7" fill="#3294e2"/>
<rect y="171" width="143" height="11" fill="#3ab4e0"/>
<rect x="143" y="171" width="75" height="11" fill="#2a5cc8"/>
<rect y="182" width="218" height="6" fill="#2e56b0"/>
<rect x="0" y="183.7" width="218" height="2.2" fill="#23306e"/>
<rect y="188" width="218" height="12" fill="#2f70d2"/>
<rect y="200" width="218" height="18" fill="#2a5cc0"/>
<rect x="131" y="208" width="27" height="2" fill="#24306a"/>
</svg>
<rect x="18.5" y="21" width="15.5" height="14" fill="#2a5cc0"/>
<rect x="18.5" y="24" width="15.5" height="1" fill="#3a9ad8"/><rect x="18.5" y="28" width="15.5" height="1" fill="#1e2c6a"/><rect x="18.5" y="31" width="15.5" height="1" fill="#3a9ad8"/>
<rect x="37" y="24" width="7" height="14" fill="#c8c8c8"/>
<rect x="37" y="24" width="1" height="14" fill="#777"/>
<rect x="43" y="15" width="1.8" height="17" fill="#2a2a2a"/>
<rect x="39" y="12" width="10" height="1.6" fill="#3a3a3a" transform="rotate(15 44 13)"/>
<rect x="47" y="0" width="3" height="38" fill="#e8e8e8"/>
</svg>
<!-- right footer -->
<div class="nb" style="left:724.1px;width:28.4px;border-radius:9px 0 0 9px"><svg class="abs" style="left:10.5px;top:6px" width="7" height="6" viewBox="0 0 7 6"><path d="M0.8 0.5v5M5.5 0.7L3 3l2.5 2.3" stroke="#333" stroke-width="1.1" fill="none"/></svg></div>
<div class="nb" style="left:755.4px;width:29.2px"><svg class="abs" style="left:11px;top:5px" width="6" height="9" viewBox="0 0 6 9"><path d="M4.5 0.8L1 4.5l3.5 3.7" stroke="#222" stroke-width="1.3" fill="none"/></svg></div>
<div class="abs" style="left:799.6px;top:876.5px;font-size:14.5px;line-height:18px;letter-spacing:0.2px;color:#222">38 / 96</div>
<div class="nb" style="left:854px;width:29.2px"><svg class="abs" style="left:12px;top:5px" width="6" height="9" viewBox="0 0 6 9"><path d="M1.5 0.8L5 4.5 1.5 8.2" stroke="#222" stroke-width="1.3" fill="none"/></svg></div>
<div class="nb" style="left:885.7px;width:28.6px;border-radius:0 9px 9px 0"><svg class="abs" style="left:10.5px;top:6px" width="7" height="6" viewBox="0 0 7 6"><path d="M1.5 0.7L4 3 1.5 5.3M6.2 0.5v5" stroke="#333" stroke-width="1.1" fill="none"/></svg></div>
<div class="abs" style="left:972.2px;top:871.1px;width:105.4px;height:40px;border:1px solid #6a6a8a;border-radius:11px"></div>
<div class="abs" style="left:982.5px;top:879px;font-size:10px;line-height:12px;color:#222">+</div>
<div class="abs" style="left:1001px;top:876px;width:64px;font-size:9.5px;font-weight:bold;line-height:10.8px;text-align:center;color:#111;letter-spacing:-0.1px">Neues Objekt<br>anlegen</div>
<div class="abs" style="left:1020.8px;top:843.6px;width:42px;height:42px;border-radius:50%;background:#1f74e8"></div>
<svg class="abs" style="left:1030px;top:856px" width="23" height="20" viewBox="0 0 23 20"><path d="M1 2L21.3 1.2 21.5 14.5 14.5 15.5 12 18.5 9.8 15.6 1.5 15.6z" fill="#fff"/></svg>

</body></html>
